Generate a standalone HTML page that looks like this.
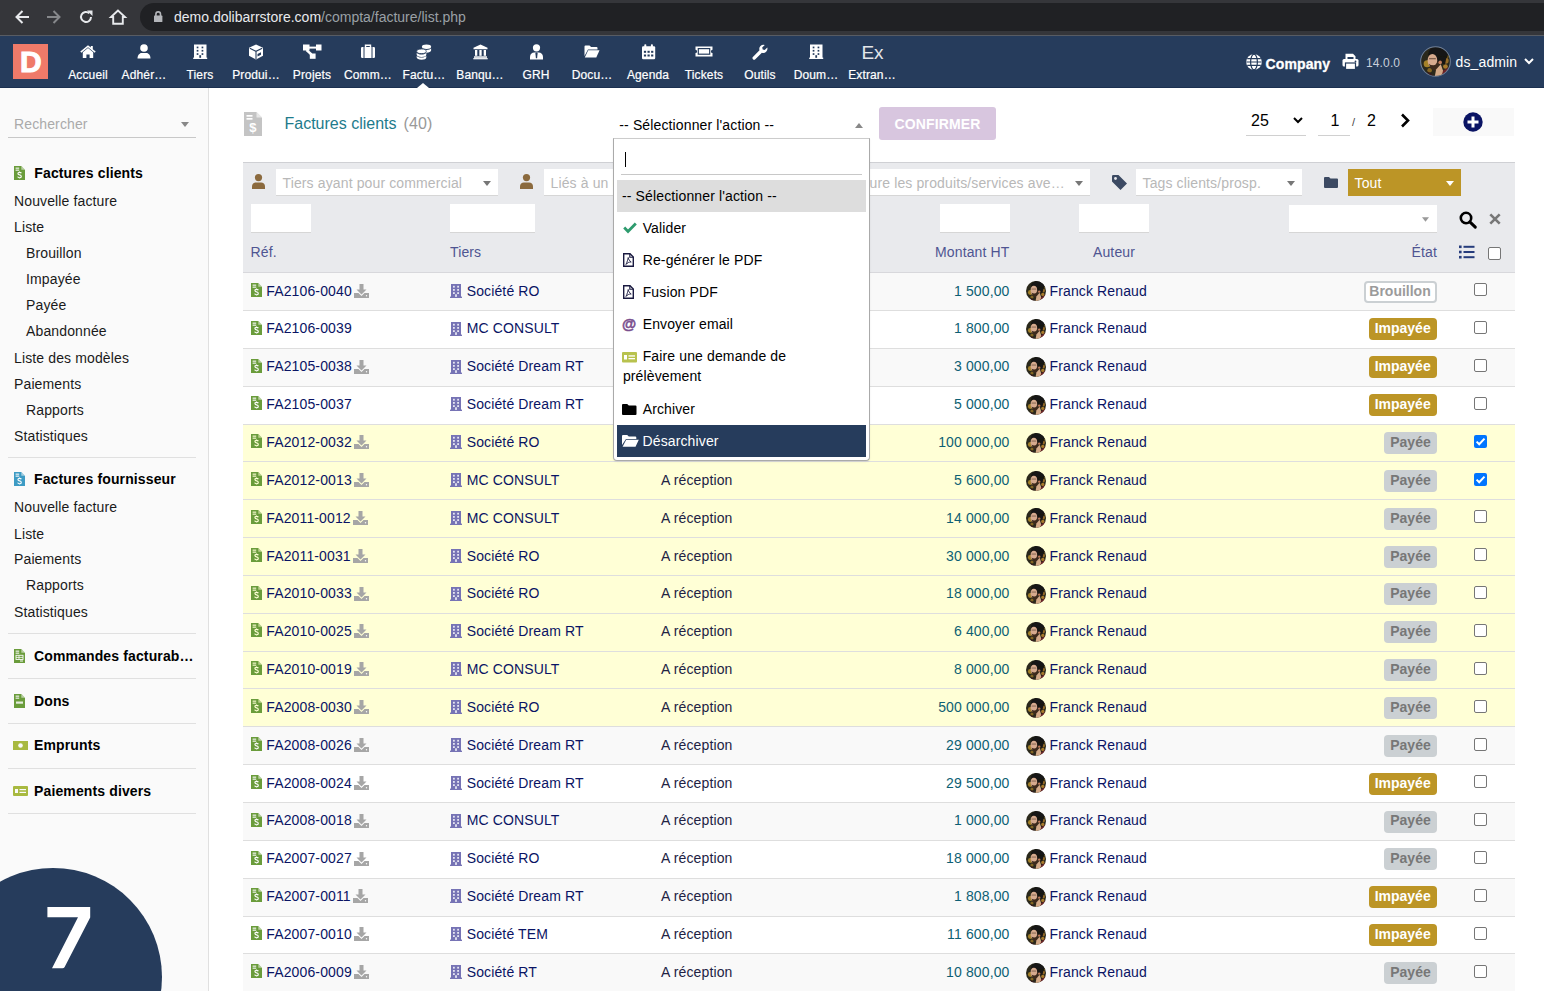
<!DOCTYPE html><html><head><meta charset="utf-8"><title>Factures clients</title><style>
*{box-sizing:border-box;margin:0;padding:0}
html,body{width:1544px;height:991px;overflow:hidden;background:#fff;font-family:"Liberation Sans", sans-serif;font-size:14px;color:#000;letter-spacing:0.13px}
.a{position:absolute}
.t{position:absolute;white-space:nowrap;line-height:1}
svg{position:absolute;display:block;overflow:visible}
</style></head><body>
<svg width="0" height="0" style="position:absolute;left:0;top:0"><defs><clipPath id="avc"><circle cx="10" cy="10" r="10"/></clipPath><filter id="avb" x="-10%" y="-10%" width="120%" height="120%"><feGaussianBlur stdDeviation="0.45"/></filter><g id="avg"><g clip-path="url(#avc)"><rect x="-1" y="-1" width="22" height="22" fill="#2a281b"/><g filter="url(#avb)"><circle cx="4.3" cy="11.5" r="2.4" fill="#b8902c" opacity="0.85"/><circle cx="6" cy="16" r="1.6" fill="#9a7424" opacity="0.8"/><circle cx="17" cy="9.5" r="2" fill="#a8782a" opacity="0.85"/><circle cx="16.8" cy="13.4" r="1.6" fill="#c08a30" opacity="0.85"/><circle cx="18" cy="6.5" r="1.1" fill="#705a20"/><ellipse cx="11.8" cy="5" rx="6.8" ry="5.4" fill="#181612"/><path d="M12 6L17.5 7L16.5 12L13.5 11z" fill="#181612"/><ellipse cx="7.9" cy="9.4" rx="3.3" ry="4.6" fill="#d6aa8e"/><rect x="5.6" y="7.6" width="4.6" height="0.9" fill="#5a4030" opacity="0.7"/><path d="M5.5 11.5Q7 16.5 10 16.2Q12.5 15.5 12.6 10.5L11.4 9.6Q10.5 12.5 8.6 12.6Q6.5 12.5 5.5 11.5z" fill="#3e2a1e"/><circle cx="13.2" cy="10.6" r="1.2" fill="#c07c5c"/><path d="M10.4 15.5L13.6 11.8L15.6 17.5L13.5 20.5H9.5z" fill="#d4aa88"/><path d="M15.2 16.2L19.5 13.8L20.5 20.5H14z" fill="#6c2228"/><path d="M5 17L9.8 20.5H3.5z" fill="#3a1a1e"/></g></g></g></defs></svg>
<div class="a" style="left:0px;top:0px;width:1544px;height:36px;background:#35363a;"></div>
<div class="a" style="left:0px;top:35px;width:1544px;height:1px;background:#585c63;"></div>
<div class="a" style="left:140px;top:3px;width:1440px;height:28px;background:#202124;border-radius:14px;"></div>
<svg style="left:15px;top:10px;" width="14" height="14" viewBox="0 0 14 14"><path d="M14 7H1.5M7.5 1L1.5 7l6 6" fill="none" stroke="#e8eaed" stroke-width="2"/></svg>
<svg style="left:47px;top:10px;" width="14" height="14" viewBox="0 0 14 14"><path d="M0 7h12.5M6.5 1l6 6-6 6" fill="none" stroke="#86888b" stroke-width="2"/></svg>
<svg style="left:79px;top:10px;" width="14" height="14" viewBox="0 0 14 14"><path d="M12 7a5 5 0 1 1-1.6-3.7" fill="none" stroke="#e8eaed" stroke-width="2"/><path d="M8 0.5h5.5V6z" fill="#e8eaed"/></svg>
<svg style="left:110px;top:9px;" width="16" height="16" viewBox="0 0 16 16"><path d="M8 1.5L1 8h2.2v6.8h9.6V8H15z" fill="none" stroke="#e8eaed" stroke-width="1.9" stroke-linejoin="miter"/></svg>
<svg style="left:154px;top:11px;" width="8.4" height="11" viewBox="0 0 8.4 11"><rect x="0" y="4.6" width="8.4" height="6.4" rx="0.6" fill="#b4b6ba"/><path d="M1.9 5V3.2a2.3 2.3 0 0 1 4.6 0V5" fill="none" stroke="#b4b6ba" stroke-width="1.6"/></svg>
<div class="t" style="left:174.00px;top:10.15px;font-size:14px;color:#e8eaed;font-weight:normal;letter-spacing:0;">demo.dolibarrstore.com<span style="color:#9aa0a6">/compta/facture/list.php</span></div>
<div class="a" style="left:0px;top:36px;width:1544px;height:52px;background:#263c5c;"></div>
<div class="a" style="left:0px;top:87px;width:1544px;height:1px;background:#1b3050;"></div>
<div class="a" style="left:13px;top:44px;width:35px;height:35px;background:#ef7a69;"></div>
<div class="t" style="left:-119.00px;width:300px;text-align:center;top:47.11px;font-size:30px;color:#fff;font-weight:bold;-webkit-text-stroke:1px #fff;">D</div>
<svg style="left:79.5px;top:44px;" width="17" height="14" viewBox="0 0 17 14"><path d="M8 1.2L0.3 7.6l1 1.1L8 3.2l6.7 5.5 1-1.1L12.8 5.3V2h-2v1.6z" fill="#fff"/><path d="M2.8 8.2L8 4l5.2 4.2V14H9.6v-3.6H6.4V14H2.8z" fill="#fff"/></svg>
<div class="t" style="left:-62.00px;width:300px;text-align:center;top:69.34px;font-size:12px;color:#fff;font-weight:normal;-webkit-text-stroke:0.2px #fff;">Accueil</div>
<svg style="left:136.0px;top:44px;" width="16" height="16" viewBox="0 0 16 16"><circle cx="8" cy="4" r="3.8" fill="#fff"/><path d="M1.5 14.5c0-3.4 2-5.6 4-5.6h5c2 0 4 2.2 4 5.6z" fill="#fff"/></svg>
<div class="t" style="left:-6.00px;width:300px;text-align:center;top:69.34px;font-size:12px;color:#fff;font-weight:normal;-webkit-text-stroke:0.2px #fff;">Adhér…</div>
<svg style="left:192.0px;top:44px;" width="16" height="16" viewBox="0 0 16 16"><rect x="2" y="0.5" width="12.5" height="13.8" fill="#fff"/><rect x="1.2" y="13.6" width="14" height="1.4" fill="#fff"/><g fill="#263c5c"><rect x="4.7" y="2.6" width="1.7" height="1.7"/><rect x="9.6" y="2.6" width="1.7" height="1.7"/><rect x="4.7" y="5.9" width="1.7" height="1.7"/><rect x="9.6" y="5.9" width="1.7" height="1.7"/><rect x="4.7" y="9.2" width="1.7" height="1.7"/><rect x="9.6" y="9.2" width="1.7" height="1.7"/><rect x="7.3" y="11.2" width="1.8" height="2.6"/></g></svg>
<div class="t" style="left:50.00px;width:300px;text-align:center;top:69.34px;font-size:12px;color:#fff;font-weight:normal;-webkit-text-stroke:0.2px #fff;">Tiers</div>
<svg style="left:248.0px;top:44px;" width="16" height="16" viewBox="0 0 16 16"><path d="M8 0.5L15 3.8v8L8 15.5 1 11.8v-8z" fill="#fff"/><path d="M1.8 4.3L8 7.3l6.2-3M8 7.3v7.6" fill="none" stroke="#263c5c" stroke-width="1.1"/><path d="M9.5 10l3.5-1.8v2.6L9.5 12.6z" fill="#263c5c"/></svg>
<div class="t" style="left:106.00px;width:300px;text-align:center;top:69.34px;font-size:12px;color:#fff;font-weight:normal;-webkit-text-stroke:0.2px #fff;">Produi…</div>
<svg style="left:302.5px;top:44px;" width="19" height="15" viewBox="0 0 19 15"><rect x="0" y="0.5" width="6.5" height="6" fill="#fff"/><rect x="6" y="2.6" width="7" height="2" fill="#fff"/><rect x="13" y="0.5" width="5.5" height="6" fill="#fff"/><path d="M3.5 6L8.5 10.5" stroke="#fff" stroke-width="2.4"/><rect x="6.8" y="9.5" width="5.8" height="5.3" fill="#fff"/></svg>
<div class="t" style="left:162.00px;width:300px;text-align:center;top:69.34px;font-size:12px;color:#fff;font-weight:normal;-webkit-text-stroke:0.2px #fff;">Projets</div>
<svg style="left:360.0px;top:44px;" width="16" height="16" viewBox="0 0 16 16"><path d="M5.5 3V1.2h5V3" fill="none" stroke="#fff" stroke-width="1.4"/><rect x="1" y="3" width="14" height="11" rx="1.3" fill="#fff"/><path d="M4 3v11M12 3v11" stroke="#263c5c" stroke-width="1"/></svg>
<div class="t" style="left:218.00px;width:300px;text-align:center;top:69.34px;font-size:12px;color:#fff;font-weight:normal;-webkit-text-stroke:0.2px #fff;">Comm…</div>
<svg style="left:416.0px;top:44px;" width="16" height="16" viewBox="0 0 16 16"><ellipse cx="10.5" cy="2.8" rx="4.6" ry="2.2" fill="#fff"/><path d="M5.9 4.3v2.2c0 1.2 2 2.2 4.6 2.2s4.6-1 4.6-2.2V4.3c-0.6 1-2.4 1.7-4.6 1.7s-4-0.7-4.6-1.7z" fill="#fff"/><ellipse cx="5.5" cy="7.3" rx="4.8" ry="2.3" fill="#fff" stroke="#263c5c" stroke-width="0.8"/><path d="M0.7 8.8v1.9c0 1.2 2.1 2.3 4.8 2.3s4.8-1 4.8-2.3V8.8c-0.6 1-2.5 1.8-4.8 1.8S1.3 9.8 0.7 8.8zM0.7 11.8v1.6c0 1.2 2.1 2.3 4.8 2.3s4.8-1 4.8-2.3v-1.6c-0.6 1-2.5 1.8-4.8 1.8s-4.2-0.8-4.8-1.8z" fill="#fff"/></svg>
<div class="t" style="left:274.00px;width:300px;text-align:center;top:69.34px;font-size:12px;color:#fff;font-weight:normal;-webkit-text-stroke:0.2px #fff;">Factu…</div>
<svg style="left:472.5px;top:44px;" width="15" height="16" viewBox="0 0 15 16"><path d="M7.5 0.5L14.5 3.8v1.4H0.5V3.8z" fill="#fff"/><rect x="2" y="6" width="2.3" height="5.8" fill="#fff"/><rect x="6.35" y="6" width="2.3" height="5.8" fill="#fff"/><rect x="10.7" y="6" width="2.3" height="5.8" fill="#fff"/><rect x="1" y="12.3" width="13" height="1.5" fill="#fff"/><rect x="0.3" y="14.1" width="14.4" height="1.2" fill="#fff"/></svg>
<div class="t" style="left:330.00px;width:300px;text-align:center;top:69.34px;font-size:12px;color:#fff;font-weight:normal;-webkit-text-stroke:0.2px #fff;">Banqu…</div>
<svg style="left:528.5px;top:44px;" width="15" height="16" viewBox="0 0 15 16"><circle cx="7.5" cy="3.8" r="3.6" fill="#fff"/><path d="M1 15.5v-2.5c0-2.6 2-4.4 4.2-4.4h4.6c2.2 0 4.2 1.8 4.2 4.4v2.5z" fill="#fff"/><path d="M6.8 8.6h1.4l0.4 1-0.5 4.6h-1.2l-0.5-4.6z" fill="#263c5c"/></svg>
<div class="t" style="left:386.00px;width:300px;text-align:center;top:69.34px;font-size:12px;color:#fff;font-weight:normal;-webkit-text-stroke:0.2px #fff;">GRH</div>
<svg style="left:584.0px;top:44px;" width="16" height="14" viewBox="0 0 16 14"><path d="M0.5 2.5a1 1 0 0 1 1-1h4l1.6 1.6h5.4a1 1 0 0 1 1 1v1.4H4L0.5 12z" fill="#fff"/><path d="M4.2 6.3h11.3L12.3 13.5H0.8z" fill="#fff"/></svg>
<div class="t" style="left:442.00px;width:300px;text-align:center;top:69.34px;font-size:12px;color:#fff;font-weight:normal;-webkit-text-stroke:0.2px #fff;">Docu…</div>
<svg style="left:640.5px;top:44px;" width="15" height="16" viewBox="0 0 15 16"><rect x="1" y="2.3" width="13.2" height="13" rx="1.2" fill="#fff"/><rect x="3.3" y="0.3" width="2" height="3.5" rx="0.8" fill="#fff"/><rect x="9.9" y="0.3" width="2" height="3.5" rx="0.8" fill="#fff"/><g fill="#263c5c"><rect x="2.9" y="6.8" width="2.2" height="2"/><rect x="6.5" y="6.8" width="2.2" height="2"/><rect x="10.1" y="6.8" width="2.2" height="2"/><rect x="2.9" y="10.5" width="2.2" height="2"/><rect x="6.5" y="10.5" width="2.2" height="2"/><rect x="10.1" y="10.5" width="2.2" height="2"/></g></svg>
<div class="t" style="left:498.00px;width:300px;text-align:center;top:69.34px;font-size:12px;color:#fff;font-weight:normal;-webkit-text-stroke:0.2px #fff;">Agenda</div>
<svg style="left:695.0px;top:44px;" width="18" height="15" viewBox="0 0 18 15"><path d="M0.5 2.5h17v3.3a1.6 1.6 0 0 0 0 3.2v3.5H0.5V9a1.6 1.6 0 0 0 0-3.2z" fill="#fff"/><rect x="3.3" y="4.6" width="11.4" height="5.6" fill="none" stroke="#263c5c" stroke-width="1.2"/></svg>
<div class="t" style="left:554.00px;width:300px;text-align:center;top:69.34px;font-size:12px;color:#fff;font-weight:normal;-webkit-text-stroke:0.2px #fff;">Tickets</div>
<svg style="left:752.0px;top:44px;" width="16" height="16" viewBox="0 0 16 16"><path d="M15.3 3.6l-2.6 2.5-2-0.5-0.5-2L12.8 1A4.2 4.2 0 0 0 7.5 6.3L0.9 12.9a1.7 1.7 0 0 0 2.4 2.4l6.6-6.6A4.2 4.2 0 0 0 15.3 3.6z" fill="#fff"/></svg>
<div class="t" style="left:610.00px;width:300px;text-align:center;top:69.34px;font-size:12px;color:#fff;font-weight:normal;-webkit-text-stroke:0.2px #fff;">Outils</div>
<svg style="left:808.0px;top:44px;" width="16" height="16" viewBox="0 0 16 16"><rect x="2" y="0.5" width="12.5" height="13.8" fill="#fff"/><rect x="1.2" y="13.6" width="14" height="1.4" fill="#fff"/><g fill="#263c5c"><rect x="4.7" y="2.6" width="1.7" height="1.7"/><rect x="9.6" y="2.6" width="1.7" height="1.7"/><rect x="4.7" y="5.9" width="1.7" height="1.7"/><rect x="9.6" y="5.9" width="1.7" height="1.7"/><rect x="4.7" y="9.2" width="1.7" height="1.7"/><rect x="9.6" y="9.2" width="1.7" height="1.7"/><rect x="7.3" y="11.2" width="1.8" height="2.6"/></g></svg>
<div class="t" style="left:666.00px;width:300px;text-align:center;top:69.34px;font-size:12px;color:#fff;font-weight:normal;-webkit-text-stroke:0.2px #fff;">Doum…</div>
<div class="t" style="left:722.50px;width:300px;text-align:center;top:42.92px;font-size:19px;color:#e4e6ea;font-weight:normal;letter-spacing:0;">Ex</div>
<div class="t" style="left:722.00px;width:300px;text-align:center;top:69.34px;font-size:12px;color:#fff;font-weight:normal;-webkit-text-stroke:0.2px #fff;">Extran…</div>
<svg style="left:417px;top:83px;" width="12" height="5" viewBox="0 0 12 5"><path d="M0 5L6 0l6 5z" fill="#fff"/></svg>
<svg style="left:1246px;top:54px;" width="16" height="16" viewBox="0 0 16 16"><circle cx="8" cy="8" r="7.8" fill="#fff"/><path d="M0.4 8h15.2M1.2 4.6h13.6M1.2 11.4h13.6" stroke="#263c5c" stroke-width="1.1"/><ellipse cx="8" cy="8" rx="3.4" ry="7.8" fill="none" stroke="#263c5c" stroke-width="1.2"/></svg>
<div class="t" style="left:1265.50px;top:56.85px;font-size:14px;color:#fff;font-weight:bold;-webkit-text-stroke:0.3px #fff;">Company</div>
<svg style="left:1342px;top:53px;" width="17" height="17" viewBox="0 0 17 17"><path d="M3.5 0.8h7.5l2.5 2.5V6h-2V4H5.5v2h-2z" fill="#fff"/><rect x="0.5" y="6" width="16" height="7.5" rx="1.5" fill="#fff"/><rect x="3.5" y="10" width="10" height="6.5" fill="#fff" stroke="#263c5c" stroke-width="1.2"/><circle cx="13.5" cy="8.5" r="0.9" fill="#263c5c"/></svg>
<div class="t" style="left:1366.00px;top:56.84px;font-size:12px;color:#c9cfda;font-weight:normal;">14.0.0</div>
<svg style="left:1420px;top:46px" width="31" height="31" viewBox="-0.6 -0.6 21.2 21.2"><use href="#avg"/><circle cx="10" cy="10" r="10.15" fill="none" stroke="#6f7f96" stroke-width="0.7"/></svg>
<div class="t" style="left:1455.50px;top:54.65px;font-size:14px;color:#fff;font-weight:normal;">ds_admin</div>
<svg style="left:1524px;top:58px;" width="10" height="7" viewBox="0 0 10 7"><path d="M1 1l4 4 4-4" fill="none" stroke="#fff" stroke-width="2"/></svg>
<div class="a" style="left:0px;top:88px;width:208px;height:903px;background:#fafafa;"></div>
<div class="a" style="left:208px;top:88px;width:1px;height:903px;background:#e0e0e0;"></div>
<div class="t" style="left:14.00px;top:117.15px;font-size:14px;color:#aaa;font-weight:normal;">Rechercher</div>
<svg style="left:181px;top:122px;" width="8" height="5" viewBox="0 0 8 5"><path d="M0 0h8L4 5z" fill="#888"/></svg>
<div class="a" style="left:8px;top:137px;width:188px;height:1px;background:#c8c8c8;"></div>
<svg style="left:14px;top:166px;" width="11" height="14" viewBox="0 0 11 14"><path d="M0 0h7.3L11 3.7V14H0z" fill="#6a9c3b"/><path d="M7.3 0v3.7H11" fill="#fafafa" opacity="0.55"/><g fill="#fafafa"><rect x="1.6" y="1.6" width="3.6" height="1.1"/><rect x="1.6" y="3.6" width="3.6" height="1.1"/></g><path d="M7.3 7.3Q7 6.4 5.6 6.4Q3.9 6.4 3.9 7.6Q3.9 8.6 5.5 8.9Q7.3 9.2 7.3 10.4Q7.3 11.7 5.5 11.7Q4 11.7 3.7 10.7M5.5 5.6v1M5.5 11.6v1" fill="none" stroke="#fafafa" stroke-width="1.15"/></svg>
<div class="t" style="left:34.30px;top:165.85px;font-size:14px;color:#000;font-weight:bold;">Factures clients</div>
<div class="t" style="left:14.00px;top:193.85px;font-size:14px;color:#1a1a1a;font-weight:normal;">Nouvelle facture</div>
<div class="t" style="left:14.00px;top:219.95px;font-size:14px;color:#1a1a1a;font-weight:normal;">Liste</div>
<div class="t" style="left:26.00px;top:246.15px;font-size:14px;color:#1a1a1a;font-weight:normal;">Brouillon</div>
<div class="t" style="left:26.00px;top:272.15px;font-size:14px;color:#1a1a1a;font-weight:normal;">Impayée</div>
<div class="t" style="left:26.00px;top:298.15px;font-size:14px;color:#1a1a1a;font-weight:normal;">Payée</div>
<div class="t" style="left:26.00px;top:324.15px;font-size:14px;color:#1a1a1a;font-weight:normal;">Abandonnée</div>
<div class="t" style="left:14.00px;top:350.65px;font-size:14px;color:#1a1a1a;font-weight:normal;">Liste des modèles</div>
<div class="t" style="left:14.00px;top:376.75px;font-size:14px;color:#1a1a1a;font-weight:normal;">Paiements</div>
<div class="t" style="left:26.00px;top:402.85px;font-size:14px;color:#1a1a1a;font-weight:normal;">Rapports</div>
<div class="t" style="left:14.00px;top:429.05px;font-size:14px;color:#1a1a1a;font-weight:normal;">Statistiques</div>
<div class="a" style="left:8px;top:457px;width:188px;height:1px;background:#e0e0e0;"></div>
<svg style="left:14px;top:472px;" width="11" height="14" viewBox="0 0 11 14"><path d="M0 0h7.3L11 3.7V14H0z" fill="#3d9bc4"/><path d="M7.3 0v3.7H11" fill="#fafafa" opacity="0.55"/><g fill="#fafafa"><rect x="1.6" y="1.6" width="3.6" height="1.1"/><rect x="1.6" y="3.6" width="3.6" height="1.1"/></g><path d="M7.3 7.3Q7 6.4 5.6 6.4Q3.9 6.4 3.9 7.6Q3.9 8.6 5.5 8.9Q7.3 9.2 7.3 10.4Q7.3 11.7 5.5 11.7Q4 11.7 3.7 10.7M5.5 5.6v1M5.5 11.6v1" fill="none" stroke="#fafafa" stroke-width="1.15"/></svg>
<div class="t" style="left:34.00px;top:472.05px;font-size:14px;color:#000;font-weight:bold;">Factures fournisseur</div>
<div class="t" style="left:14.00px;top:500.15px;font-size:14px;color:#1a1a1a;font-weight:normal;">Nouvelle facture</div>
<div class="t" style="left:14.00px;top:526.65px;font-size:14px;color:#1a1a1a;font-weight:normal;">Liste</div>
<div class="t" style="left:14.00px;top:552.15px;font-size:14px;color:#1a1a1a;font-weight:normal;">Paiements</div>
<div class="t" style="left:26.00px;top:578.15px;font-size:14px;color:#1a1a1a;font-weight:normal;">Rapports</div>
<div class="t" style="left:14.00px;top:605.15px;font-size:14px;color:#1a1a1a;font-weight:normal;">Statistiques</div>
<div class="a" style="left:8px;top:633px;width:188px;height:1px;background:#e0e0e0;"></div>
<svg style="left:14px;top:649px;" width="11" height="14" viewBox="0 0 11 14"><path d="M0 0h7.3L11 3.7V14H0z" fill="#6a9c3b"/><path d="M7.3 0v3.7H11" fill="#fafafa" opacity="0.55"/><g fill="#fafafa"><rect x="1.6" y="1.6" width="3.6" height="1.1"/><rect x="1.6" y="3.6" width="3.6" height="1.1"/></g></svg>
<svg style="left:14px;top:649px;" width="11" height="14" viewBox="0 0 11 14"><rect x="2" y="6.3" width="7" height="4.2" fill="none" stroke="#fafafa" stroke-width="0.9"/><path d="M2 8.4h7M5 6.3v4.2" stroke="#fafafa" stroke-width="0.8"/><rect x="6" y="11.5" width="3" height="1" fill="#fafafa"/></svg>
<div class="t" style="left:34.00px;top:648.95px;font-size:14px;color:#000;font-weight:bold;">Commandes facturab…</div>
<div class="a" style="left:8px;top:678px;width:188px;height:1px;background:#e0e0e0;"></div>
<svg style="left:14px;top:694px;" width="11" height="14" viewBox="0 0 11 14"><path d="M0 0h7.3L11 3.7V14H0z" fill="#6a9c3b"/><path d="M7.3 0v3.7H11" fill="#fafafa" opacity="0.55"/><g fill="#fafafa"><rect x="1.6" y="1.6" width="3.6" height="1.1"/><rect x="1.6" y="3.6" width="3.6" height="1.1"/></g></svg>
<svg style="left:14px;top:694px;" width="11" height="14" viewBox="0 0 11 14"><rect x="2" y="7.5" width="7" height="2.2" fill="#fafafa" opacity="0.85"/></svg>
<div class="t" style="left:34.00px;top:693.65px;font-size:14px;color:#000;font-weight:bold;">Dons</div>
<div class="a" style="left:8px;top:723px;width:188px;height:1px;background:#e0e0e0;"></div>
<svg style="left:13px;top:741px;" width="15" height="9" viewBox="0 0 15 9"><rect x="0" y="0" width="15" height="9" fill="#a8b940"/><circle cx="7.5" cy="4.5" r="2.3" fill="#fafafa"/></svg>
<div class="t" style="left:34.00px;top:738.15px;font-size:14px;color:#000;font-weight:bold;">Emprunts</div>
<div class="a" style="left:8px;top:768px;width:188px;height:1px;background:#e0e0e0;"></div>
<svg style="left:13px;top:786px;" width="15" height="10" viewBox="0 0 15 10"><rect x="0" y="0" width="15" height="10" rx="1" fill="#a8b940"/><rect x="2" y="3" width="3" height="4" fill="#fafafa"/><rect x="6.5" y="3" width="6.5" height="1.2" fill="#fafafa"/><rect x="6.5" y="5.8" width="6.5" height="1.2" fill="#fafafa"/></svg>
<div class="t" style="left:34.00px;top:783.75px;font-size:14px;color:#000;font-weight:bold;">Paiements divers</div>
<div class="a" style="left:8px;top:813px;width:188px;height:1px;background:#e0e0e0;"></div>
<div class="a" style="left:-56px;top:868px;width:218px;height:218px;border-radius:50%;background:#263c5c"></div>
<svg style="left:47px;top:907px;" width="44" height="62" viewBox="0 0 44 62"><path d="M0.4 0H43.2V10.5L17.5 60.2Q16.8 61.2 15.5 61.2H5L31 10.2H0.4z" fill="#fff"/></svg>
<svg style="left:244px;top:112px;" width="18" height="24" viewBox="0 0 18 24"><path d="M0 0h12.5L18 5.5V24H0z" fill="#c4c4c4"/><path d="M12.5 0v5.5H18z" fill="#fff" opacity="0.6"/><g fill="#fff"><rect x="2.5" y="3" width="6" height="1.7"/><rect x="2.5" y="6" width="6" height="1.7"/></g><text x="9" y="20" font-family="Liberation Sans" font-weight="bold" font-size="13" fill="#fff" text-anchor="middle">$</text></svg>
<div class="t" style="left:284.50px;top:116.46px;font-size:16px;color:#1e7b8c;font-weight:normal;letter-spacing:0;">Factures clients</div>
<div class="t" style="left:403.50px;top:116.46px;font-size:16px;color:#999;font-weight:normal;">(40)</div>
<div class="t" style="left:619.30px;top:118.15px;font-size:14px;color:#000;font-weight:normal;">-- Sélectionner l'action --</div>
<svg style="left:855px;top:122.5px;" width="8" height="5" viewBox="0 0 8 5"><path d="M0 5h8L4 0z" fill="#888"/></svg>
<div class="a" style="left:879px;top:107px;width:117px;height:33px;background:#d8c6df;border-radius:3px;"></div>
<div class="t" style="left:787.50px;width:300px;text-align:center;top:117.15px;font-size:14px;color:#fff;font-weight:bold;">CONFIRMER</div>
<div class="t" style="left:1251.00px;top:112.96px;font-size:16px;color:#000;font-weight:normal;">25</div>
<svg style="left:1293px;top:117px;" width="10" height="6" viewBox="0 0 10 6"><path d="M1 1l4 4 4-4" fill="none" stroke="#000" stroke-width="2"/></svg>
<div class="a" style="left:1246px;top:135px;width:60px;height:1px;background:#d0d0d0;"></div>
<div class="t" style="left:1330.50px;top:112.96px;font-size:16px;color:#000;font-weight:normal;">1</div>
<div class="a" style="left:1318px;top:135px;width:32px;height:1px;background:#d0d0d0;"></div>
<div class="t" style="left:1352.00px;top:117.19px;font-size:11px;color:#444;font-weight:normal;">/</div>
<div class="t" style="left:1367.00px;top:112.96px;font-size:16px;color:#000;font-weight:normal;">2</div>
<svg style="left:1400px;top:113px;" width="10" height="15" viewBox="0 0 10 15"><path d="M2 1.5l6 6-6 6" fill="none" stroke="#000" stroke-width="2.6"/></svg>
<div class="a" style="left:1433px;top:108px;width:81px;height:28px;background:#f9f9f9;"></div>
<svg style="left:1463px;top:111.5px;" width="20" height="20" viewBox="0 0 20 20"><circle cx="10" cy="10" r="9.7" fill="#0a1464"/><path d="M10 4.5v11M4.5 10h11" stroke="#fff" stroke-width="3"/></svg>
<div class="a" style="left:243px;top:162px;width:1272px;height:110px;background:#e9eaed;"></div>
<div class="a" style="left:243px;top:162px;width:1272px;height:1px;background:#cfd0d4;"></div>
<div class="a" style="left:243px;top:272px;width:1272px;height:1px;background:#d8d8dc;"></div>
<svg style="left:252px;top:174px;" width="13" height="15" viewBox="0 0 13 15"><circle cx="6.5" cy="3.6" r="3.6" fill="#8b6a3e"/><path d="M0 15v-2.6C0 10 1.8 8.4 3.9 8.4h5.2C11.2 8.4 13 10 13 12.4V15z" fill="#8b6a3e"/></svg>
<div class="a" style="left:276px;top:169px;width:222px;height:27px;background:#fff;border-bottom:1px solid #d6d6d6;"></div><div class="t" style="left:282.50px;top:176.15px;font-size:14px;color:#b8b8b8;font-weight:normal;">Tiers ayant pour commercial</div><svg style="left:483px;top:181px;" width="8" height="5" viewBox="0 0 8 5"><path d="M0 0h8L4 5z" fill="#777"/></svg>
<svg style="left:520px;top:174px;" width="13" height="15" viewBox="0 0 13 15"><circle cx="6.5" cy="3.6" r="3.6" fill="#8b6a3e"/><path d="M0 15v-2.6C0 10 1.8 8.4 3.9 8.4h5.2C11.2 8.4 13 10 13 12.4V15z" fill="#8b6a3e"/></svg>
<div class="a" style="left:544px;top:169px;width:546px;height:27px;background:#fff;border-bottom:1px solid #d6d6d6;"></div><div class="t" style="left:550.50px;top:176.15px;font-size:14px;color:#b8b8b8;font-weight:normal;">Liés à un utilisateur</div><svg style="left:1075px;top:181px;" width="8" height="5" viewBox="0 0 8 5"><path d="M0 0h8L4 5z" fill="#777"/></svg>
<div class="t" style="left:869.50px;top:176.15px;font-size:14px;color:#b8b8b8;font-weight:normal;">ure les produits/services ave…</div>
<svg style="left:1112px;top:175px;" width="15" height="15" viewBox="0 0 15 15"><path d="M0 1.2A1.2 1.2 0 0 1 1.2 0H6.5L15 8.5 8.5 15 0 6.5z" fill="#3c4a63"/><circle cx="3.5" cy="3.5" r="1.4" fill="#e9eaed"/></svg>
<div class="a" style="left:1136px;top:169px;width:166px;height:27px;background:#fff;border-bottom:1px solid #d6d6d6;"></div><div class="t" style="left:1142.50px;top:176.15px;font-size:14px;color:#b8b8b8;font-weight:normal;">Tags clients/prosp.</div><svg style="left:1287px;top:181px;" width="8" height="5" viewBox="0 0 8 5"><path d="M0 0h8L4 5z" fill="#777"/></svg>
<svg style="left:1324px;top:177px;" width="14" height="11" viewBox="0 0 14 11"><path d="M0 1a1 1 0 0 1 1-1h4l1.5 1.6H13a1 1 0 0 1 1 1V10a1 1 0 0 1-1 1H1a1 1 0 0 1-1-1z" fill="#3c4a63"/></svg>
<div class="a" style="left:1348px;top:169px;width:113px;height:27px;background:#bc9526;"></div>
<div class="t" style="left:1354.50px;top:176.15px;font-size:14px;color:#fff;font-weight:normal;">Tout</div>
<svg style="left:1446px;top:181px;" width="8" height="5" viewBox="0 0 8 5"><path d="M0 0h8L4 5z" fill="#fff"/></svg>
<div class="a" style="left:251px;top:204px;width:60px;height:29px;background:#fff;border-bottom:1px solid #d6d6d6;"></div>
<div class="a" style="left:450px;top:204px;width:85px;height:29px;background:#fff;border-bottom:1px solid #d6d6d6;"></div>
<div class="a" style="left:940px;top:204px;width:70px;height:29px;background:#fff;border-bottom:1px solid #d6d6d6;"></div>
<div class="a" style="left:1079px;top:204px;width:70px;height:29px;background:#fff;border-bottom:1px solid #d6d6d6;"></div>
<div class="a" style="left:1289px;top:205px;width:148px;height:27.5px;background:#fff;border-bottom:1px solid #d6d6d6;"></div>
<svg style="left:1421.5px;top:217px;" width="7" height="5" viewBox="0 0 8 5"><path d="M0 0h8L4 5z" fill="#999"/></svg>
<svg style="left:1459px;top:211px;" width="18" height="17" viewBox="0 0 18 17"><circle cx="7" cy="7" r="5.2" fill="none" stroke="#000" stroke-width="2.6"/><path d="M10.8 10.8l5.5 5.3" stroke="#000" stroke-width="3" stroke-linecap="round"/></svg>
<svg style="left:1489px;top:213px;" width="12" height="12" viewBox="0 0 12 12"><path d="M1.3 1.3l9.4 9.4M10.7 1.3l-9.4 9.4" stroke="#777" stroke-width="2.6"/></svg>
<div class="t" style="left:250.60px;top:245.15px;font-size:14px;color:#4f5592;font-weight:normal;">Réf.</div>
<div class="t" style="left:450.00px;top:245.15px;font-size:14px;color:#4f5592;font-weight:normal;">Tiers</div>
<div class="t" style="right:534.50px;top:245.15px;font-size:14px;color:#4f5592;font-weight:normal;">Montant HT</div>
<div class="t" style="left:964.00px;width:300px;text-align:center;top:245.15px;font-size:14px;color:#4f5592;font-weight:normal;">Auteur</div>
<div class="t" style="right:107.00px;top:245.15px;font-size:14px;color:#4f5592;font-weight:normal;">État</div>
<svg style="left:1459px;top:245px;" width="16" height="14" viewBox="0 0 16 14"><g fill="#263c7c"><rect x="0" y="0.5" width="2.6" height="2.6"/><rect x="0" y="5.7" width="2.6" height="2.6"/><rect x="0" y="10.9" width="2.6" height="2.6"/><rect x="4.5" y="0.8" width="11" height="2"/><rect x="4.5" y="6" width="11" height="2"/><rect x="4.5" y="11.2" width="11" height="2"/></g></svg>
<div class="a" style="left:1488px;top:247px;width:13px;height:13px;border:1px solid #767676;border-radius:2px;background:#fff"></div>
<div class="a" style="left:243px;top:273px;width:1272px;height:37px;background:#f9f9f9"></div>
<div class="a" style="left:243px;top:311px;width:1272px;height:37px;background:#ffffff"></div>
<div class="a" style="left:243px;top:349px;width:1272px;height:37px;background:#f9f9f9"></div>
<div class="a" style="left:243px;top:387px;width:1272px;height:37px;background:#ffffff"></div>
<div class="a" style="left:243px;top:425px;width:1272px;height:36px;background:#ffffd6"></div>
<div class="a" style="left:243px;top:462px;width:1272px;height:37px;background:#ffffd6"></div>
<div class="a" style="left:243px;top:500px;width:1272px;height:37px;background:#ffffd6"></div>
<div class="a" style="left:243px;top:538px;width:1272px;height:37px;background:#ffffd6"></div>
<div class="a" style="left:243px;top:576px;width:1272px;height:37px;background:#ffffd6"></div>
<div class="a" style="left:243px;top:614px;width:1272px;height:37px;background:#ffffd6"></div>
<div class="a" style="left:243px;top:652px;width:1272px;height:36px;background:#ffffd6"></div>
<div class="a" style="left:243px;top:689px;width:1272px;height:37px;background:#ffffd6"></div>
<div class="a" style="left:243px;top:727px;width:1272px;height:37px;background:#f9f9f9"></div>
<div class="a" style="left:243px;top:765px;width:1272px;height:37px;background:#ffffff"></div>
<div class="a" style="left:243px;top:803px;width:1272px;height:37px;background:#f9f9f9"></div>
<div class="a" style="left:243px;top:841px;width:1272px;height:37px;background:#ffffff"></div>
<div class="a" style="left:243px;top:879px;width:1272px;height:37px;background:#f9f9f9"></div>
<div class="a" style="left:243px;top:917px;width:1272px;height:36px;background:#ffffff"></div>
<div class="a" style="left:243px;top:954px;width:1272px;height:37px;background:#f9f9f9"></div>
<div class="a" style="left:243px;top:310px;width:1272px;height:1px;background:#dedede"></div>
<div class="a" style="left:243px;top:348px;width:1272px;height:1px;background:#dedede"></div>
<div class="a" style="left:243px;top:386px;width:1272px;height:1px;background:#dedede"></div>
<div class="a" style="left:243px;top:424px;width:1272px;height:1px;background:#dedede"></div>
<div class="a" style="left:243px;top:461px;width:1272px;height:1px;background:#dedede"></div>
<div class="a" style="left:243px;top:499px;width:1272px;height:1px;background:#dedede"></div>
<div class="a" style="left:243px;top:537px;width:1272px;height:1px;background:#dedede"></div>
<div class="a" style="left:243px;top:575px;width:1272px;height:1px;background:#dedede"></div>
<div class="a" style="left:243px;top:613px;width:1272px;height:1px;background:#dedede"></div>
<div class="a" style="left:243px;top:651px;width:1272px;height:1px;background:#dedede"></div>
<div class="a" style="left:243px;top:688px;width:1272px;height:1px;background:#dedede"></div>
<div class="a" style="left:243px;top:726px;width:1272px;height:1px;background:#dedede"></div>
<div class="a" style="left:243px;top:764px;width:1272px;height:1px;background:#dedede"></div>
<div class="a" style="left:243px;top:802px;width:1272px;height:1px;background:#dedede"></div>
<div class="a" style="left:243px;top:840px;width:1272px;height:1px;background:#dedede"></div>
<div class="a" style="left:243px;top:878px;width:1272px;height:1px;background:#dedede"></div>
<div class="a" style="left:243px;top:916px;width:1272px;height:1px;background:#dedede"></div>
<div class="a" style="left:243px;top:953px;width:1272px;height:1px;background:#dedede"></div>
<div class="a" style="left:243px;top:991px;width:1272px;height:1px;background:#dedede"></div>
<svg style="left:251px;top:283px;" width="11" height="14" viewBox="0 0 11 14"><path d="M0 0h7.3L11 3.7V14H0z" fill="#6a9c3b"/><path d="M7.3 0v3.7H11" fill="#f9f9f9" opacity="0.55"/><g fill="#f9f9f9"><rect x="1.6" y="1.6" width="3.6" height="1.1"/><rect x="1.6" y="3.6" width="3.6" height="1.1"/></g><path d="M7.3 7.3Q7 6.4 5.6 6.4Q3.9 6.4 3.9 7.6Q3.9 8.6 5.5 8.9Q7.3 9.2 7.3 10.4Q7.3 11.7 5.5 11.7Q4 11.7 3.7 10.7M5.5 5.6v1M5.5 11.6v1" fill="none" stroke="#f9f9f9" stroke-width="1.15"/></svg>
<div class="t" style="left:266.30px;top:283.57px;font-size:14px;color:#0a1464;font-weight:normal;">FA2106-0040<svg style="position:absolute;left:100%;margin-left:2.7px;top:0.43px" width="15" height="14" viewBox="0 0 15 14"><path d="M5.5 0h4v5.5h3L7.5 10.5 2.5 5.5h3z" fill="#a6a6a6"/><path d="M0 9h4.5l3 3 3-3H15v5H0z" fill="#a6a6a6"/><circle cx="12.5" cy="11.8" r="0.7" fill="#fff"/></svg></div>
<svg style="left:450px;top:284px;" width="12" height="14" viewBox="0 0 12 14"><rect x="1" y="0" width="10" height="13" fill="#7673b5"/><rect x="0" y="12.6" width="12" height="1.4" fill="#7673b5"/><g fill="#e6e6f2"><rect x="3" y="1.8" width="1.8" height="1.8"/><rect x="7.2" y="1.8" width="1.8" height="1.8"/><rect x="3" y="5" width="1.8" height="1.8"/><rect x="7.2" y="5" width="1.8" height="1.8"/><rect x="3" y="8.2" width="1.8" height="1.8"/><rect x="7.2" y="8.2" width="1.8" height="1.8"/><rect x="5.1" y="10.3" width="1.8" height="2.6"/></g></svg>
<div class="t" style="left:466.70px;top:283.57px;font-size:14px;color:#0a1464;font-weight:normal;">Société RO</div>
<div class="t" style="left:661.00px;top:283.57px;font-size:14px;color:#222244;font-weight:normal;">A réception</div>
<div class="t" style="right:534.50px;top:283.57px;font-size:14px;color:#0d5f74;font-weight:normal;">1 500,00</div>
<svg style="left:1026px;top:281.32px" width="20" height="20" viewBox="0 0 20 20"><use href="#avg"/></svg>
<div class="t" style="left:1049.50px;top:283.57px;font-size:14px;color:#0a1464;font-weight:normal;">Franck Renaud</div>
<div class="a" style="left:1364px;top:280.62px;width:72.5px;height:22px;border:2px solid #cbd0d3;border-radius:4px;background:#fff"></div>
<div class="t" style="left:1250.00px;width:300px;text-align:center;top:283.57px;font-size:14px;color:#9b9b9b;font-weight:bold;letter-spacing:0;">Brouillon</div>
<div class="a" style="left:1474px;top:283.32px;width:13px;height:13px;border:1px solid #767676;border-radius:2px;background:#fff"></div>
<svg style="left:251px;top:321px;" width="11" height="14" viewBox="0 0 11 14"><path d="M0 0h7.3L11 3.7V14H0z" fill="#6a9c3b"/><path d="M7.3 0v3.7H11" fill="#ffffff" opacity="0.55"/><g fill="#ffffff"><rect x="1.6" y="1.6" width="3.6" height="1.1"/><rect x="1.6" y="3.6" width="3.6" height="1.1"/></g><path d="M7.3 7.3Q7 6.4 5.6 6.4Q3.9 6.4 3.9 7.6Q3.9 8.6 5.5 8.9Q7.3 9.2 7.3 10.4Q7.3 11.7 5.5 11.7Q4 11.7 3.7 10.7M5.5 5.6v1M5.5 11.6v1" fill="none" stroke="#ffffff" stroke-width="1.15"/></svg>
<div class="t" style="left:266.30px;top:321.42px;font-size:14px;color:#0a1464;font-weight:normal;">FA2106-0039</div>
<svg style="left:450px;top:322px;" width="12" height="14" viewBox="0 0 12 14"><rect x="1" y="0" width="10" height="13" fill="#7673b5"/><rect x="0" y="12.6" width="12" height="1.4" fill="#7673b5"/><g fill="#e6e6f2"><rect x="3" y="1.8" width="1.8" height="1.8"/><rect x="7.2" y="1.8" width="1.8" height="1.8"/><rect x="3" y="5" width="1.8" height="1.8"/><rect x="7.2" y="5" width="1.8" height="1.8"/><rect x="3" y="8.2" width="1.8" height="1.8"/><rect x="7.2" y="8.2" width="1.8" height="1.8"/><rect x="5.1" y="10.3" width="1.8" height="2.6"/></g></svg>
<div class="t" style="left:466.70px;top:321.42px;font-size:14px;color:#0a1464;font-weight:normal;">MC CONSULT</div>
<div class="t" style="left:661.00px;top:321.42px;font-size:14px;color:#222244;font-weight:normal;">A réception</div>
<div class="t" style="right:534.50px;top:321.42px;font-size:14px;color:#0d5f74;font-weight:normal;">1 800,00</div>
<svg style="left:1026px;top:319.17px" width="20" height="20" viewBox="0 0 20 20"><use href="#avg"/></svg>
<div class="t" style="left:1049.50px;top:321.42px;font-size:14px;color:#0a1464;font-weight:normal;">Franck Renaud</div>
<div class="a" style="left:1369px;top:318.47px;width:67.5px;height:22px;border-radius:4px;background:#bc9526"></div>
<div class="t" style="left:1252.70px;width:300px;text-align:center;top:321.42px;font-size:14px;color:#fff;font-weight:bold;letter-spacing:0;">Impayée</div>
<div class="a" style="left:1474px;top:321.17px;width:13px;height:13px;border:1px solid #767676;border-radius:2px;background:#fff"></div>
<svg style="left:251px;top:359px;" width="11" height="14" viewBox="0 0 11 14"><path d="M0 0h7.3L11 3.7V14H0z" fill="#6a9c3b"/><path d="M7.3 0v3.7H11" fill="#f9f9f9" opacity="0.55"/><g fill="#f9f9f9"><rect x="1.6" y="1.6" width="3.6" height="1.1"/><rect x="1.6" y="3.6" width="3.6" height="1.1"/></g><path d="M7.3 7.3Q7 6.4 5.6 6.4Q3.9 6.4 3.9 7.6Q3.9 8.6 5.5 8.9Q7.3 9.2 7.3 10.4Q7.3 11.7 5.5 11.7Q4 11.7 3.7 10.7M5.5 5.6v1M5.5 11.6v1" fill="none" stroke="#f9f9f9" stroke-width="1.15"/></svg>
<div class="t" style="left:266.30px;top:359.27px;font-size:14px;color:#0a1464;font-weight:normal;">FA2105-0038<svg style="position:absolute;left:100%;margin-left:2.7px;top:0.73px" width="15" height="14" viewBox="0 0 15 14"><path d="M5.5 0h4v5.5h3L7.5 10.5 2.5 5.5h3z" fill="#a6a6a6"/><path d="M0 9h4.5l3 3 3-3H15v5H0z" fill="#a6a6a6"/><circle cx="12.5" cy="11.8" r="0.7" fill="#fff"/></svg></div>
<svg style="left:450px;top:360px;" width="12" height="14" viewBox="0 0 12 14"><rect x="1" y="0" width="10" height="13" fill="#7673b5"/><rect x="0" y="12.6" width="12" height="1.4" fill="#7673b5"/><g fill="#e6e6f2"><rect x="3" y="1.8" width="1.8" height="1.8"/><rect x="7.2" y="1.8" width="1.8" height="1.8"/><rect x="3" y="5" width="1.8" height="1.8"/><rect x="7.2" y="5" width="1.8" height="1.8"/><rect x="3" y="8.2" width="1.8" height="1.8"/><rect x="7.2" y="8.2" width="1.8" height="1.8"/><rect x="5.1" y="10.3" width="1.8" height="2.6"/></g></svg>
<div class="t" style="left:466.70px;top:359.27px;font-size:14px;color:#0a1464;font-weight:normal;">Société Dream RT</div>
<div class="t" style="left:661.00px;top:359.27px;font-size:14px;color:#222244;font-weight:normal;">A réception</div>
<div class="t" style="right:534.50px;top:359.27px;font-size:14px;color:#0d5f74;font-weight:normal;">3 000,00</div>
<svg style="left:1026px;top:357.02px" width="20" height="20" viewBox="0 0 20 20"><use href="#avg"/></svg>
<div class="t" style="left:1049.50px;top:359.27px;font-size:14px;color:#0a1464;font-weight:normal;">Franck Renaud</div>
<div class="a" style="left:1369px;top:356.32px;width:67.5px;height:22px;border-radius:4px;background:#bc9526"></div>
<div class="t" style="left:1252.70px;width:300px;text-align:center;top:359.27px;font-size:14px;color:#fff;font-weight:bold;letter-spacing:0;">Impayée</div>
<div class="a" style="left:1474px;top:359.02px;width:13px;height:13px;border:1px solid #767676;border-radius:2px;background:#fff"></div>
<svg style="left:251px;top:396px;" width="11" height="14" viewBox="0 0 11 14"><path d="M0 0h7.3L11 3.7V14H0z" fill="#6a9c3b"/><path d="M7.3 0v3.7H11" fill="#ffffff" opacity="0.55"/><g fill="#ffffff"><rect x="1.6" y="1.6" width="3.6" height="1.1"/><rect x="1.6" y="3.6" width="3.6" height="1.1"/></g><path d="M7.3 7.3Q7 6.4 5.6 6.4Q3.9 6.4 3.9 7.6Q3.9 8.6 5.5 8.9Q7.3 9.2 7.3 10.4Q7.3 11.7 5.5 11.7Q4 11.7 3.7 10.7M5.5 5.6v1M5.5 11.6v1" fill="none" stroke="#ffffff" stroke-width="1.15"/></svg>
<div class="t" style="left:266.30px;top:397.12px;font-size:14px;color:#0a1464;font-weight:normal;">FA2105-0037</div>
<svg style="left:450px;top:397px;" width="12" height="14" viewBox="0 0 12 14"><rect x="1" y="0" width="10" height="13" fill="#7673b5"/><rect x="0" y="12.6" width="12" height="1.4" fill="#7673b5"/><g fill="#e6e6f2"><rect x="3" y="1.8" width="1.8" height="1.8"/><rect x="7.2" y="1.8" width="1.8" height="1.8"/><rect x="3" y="5" width="1.8" height="1.8"/><rect x="7.2" y="5" width="1.8" height="1.8"/><rect x="3" y="8.2" width="1.8" height="1.8"/><rect x="7.2" y="8.2" width="1.8" height="1.8"/><rect x="5.1" y="10.3" width="1.8" height="2.6"/></g></svg>
<div class="t" style="left:466.70px;top:397.12px;font-size:14px;color:#0a1464;font-weight:normal;">Société Dream RT</div>
<div class="t" style="left:661.00px;top:397.12px;font-size:14px;color:#222244;font-weight:normal;">A réception</div>
<div class="t" style="right:534.50px;top:397.12px;font-size:14px;color:#0d5f74;font-weight:normal;">5 000,00</div>
<svg style="left:1026px;top:394.88px" width="20" height="20" viewBox="0 0 20 20"><use href="#avg"/></svg>
<div class="t" style="left:1049.50px;top:397.12px;font-size:14px;color:#0a1464;font-weight:normal;">Franck Renaud</div>
<div class="a" style="left:1369px;top:394.18px;width:67.5px;height:22px;border-radius:4px;background:#bc9526"></div>
<div class="t" style="left:1252.70px;width:300px;text-align:center;top:397.12px;font-size:14px;color:#fff;font-weight:bold;letter-spacing:0;">Impayée</div>
<div class="a" style="left:1474px;top:396.88px;width:13px;height:13px;border:1px solid #767676;border-radius:2px;background:#fff"></div>
<svg style="left:251px;top:434px;" width="11" height="14" viewBox="0 0 11 14"><path d="M0 0h7.3L11 3.7V14H0z" fill="#6a9c3b"/><path d="M7.3 0v3.7H11" fill="#ffffd6" opacity="0.55"/><g fill="#ffffd6"><rect x="1.6" y="1.6" width="3.6" height="1.1"/><rect x="1.6" y="3.6" width="3.6" height="1.1"/></g><path d="M7.3 7.3Q7 6.4 5.6 6.4Q3.9 6.4 3.9 7.6Q3.9 8.6 5.5 8.9Q7.3 9.2 7.3 10.4Q7.3 11.7 5.5 11.7Q4 11.7 3.7 10.7M5.5 5.6v1M5.5 11.6v1" fill="none" stroke="#ffffd6" stroke-width="1.15"/></svg>
<div class="t" style="left:266.30px;top:434.97px;font-size:14px;color:#0a1464;font-weight:normal;">FA2012-0032<svg style="position:absolute;left:100%;margin-left:2.7px;top:0.03px" width="15" height="14" viewBox="0 0 15 14"><path d="M5.5 0h4v5.5h3L7.5 10.5 2.5 5.5h3z" fill="#a6a6a6"/><path d="M0 9h4.5l3 3 3-3H15v5H0z" fill="#a6a6a6"/><circle cx="12.5" cy="11.8" r="0.7" fill="#fff"/></svg></div>
<svg style="left:450px;top:435px;" width="12" height="14" viewBox="0 0 12 14"><rect x="1" y="0" width="10" height="13" fill="#7673b5"/><rect x="0" y="12.6" width="12" height="1.4" fill="#7673b5"/><g fill="#e6e6f2"><rect x="3" y="1.8" width="1.8" height="1.8"/><rect x="7.2" y="1.8" width="1.8" height="1.8"/><rect x="3" y="5" width="1.8" height="1.8"/><rect x="7.2" y="5" width="1.8" height="1.8"/><rect x="3" y="8.2" width="1.8" height="1.8"/><rect x="7.2" y="8.2" width="1.8" height="1.8"/><rect x="5.1" y="10.3" width="1.8" height="2.6"/></g></svg>
<div class="t" style="left:466.70px;top:434.97px;font-size:14px;color:#0a1464;font-weight:normal;">Société RO</div>
<div class="t" style="left:661.00px;top:434.97px;font-size:14px;color:#222244;font-weight:normal;">A réception</div>
<div class="t" style="right:534.50px;top:434.97px;font-size:14px;color:#0d5f74;font-weight:normal;">100 000,00</div>
<svg style="left:1026px;top:432.73px" width="20" height="20" viewBox="0 0 20 20"><use href="#avg"/></svg>
<div class="t" style="left:1049.50px;top:434.97px;font-size:14px;color:#0a1464;font-weight:normal;">Franck Renaud</div>
<div class="a" style="left:1384px;top:432.03px;width:52.5px;height:22px;border-radius:4px;background:#cbd0d3"></div>
<div class="t" style="left:1260.50px;width:300px;text-align:center;top:434.97px;font-size:14px;color:#777;font-weight:bold;letter-spacing:0;">Payée</div>
<div class="a" style="left:1474px;top:434.73px;width:13px;height:13px;border-radius:2px;background:#0075ff"></div>
<svg style="left:1474px;top:434.725px;" width="13" height="13" viewBox="0 0 13 13"><path d="M2.6 6.6l2.6 2.6 5.3-5.6" fill="none" stroke="#fff" stroke-width="2"/></svg>
<svg style="left:251px;top:472px;" width="11" height="14" viewBox="0 0 11 14"><path d="M0 0h7.3L11 3.7V14H0z" fill="#6a9c3b"/><path d="M7.3 0v3.7H11" fill="#ffffd6" opacity="0.55"/><g fill="#ffffd6"><rect x="1.6" y="1.6" width="3.6" height="1.1"/><rect x="1.6" y="3.6" width="3.6" height="1.1"/></g><path d="M7.3 7.3Q7 6.4 5.6 6.4Q3.9 6.4 3.9 7.6Q3.9 8.6 5.5 8.9Q7.3 9.2 7.3 10.4Q7.3 11.7 5.5 11.7Q4 11.7 3.7 10.7M5.5 5.6v1M5.5 11.6v1" fill="none" stroke="#ffffd6" stroke-width="1.15"/></svg>
<div class="t" style="left:266.30px;top:472.82px;font-size:14px;color:#0a1464;font-weight:normal;">FA2012-0013<svg style="position:absolute;left:100%;margin-left:2.7px;top:0.18px" width="15" height="14" viewBox="0 0 15 14"><path d="M5.5 0h4v5.5h3L7.5 10.5 2.5 5.5h3z" fill="#a6a6a6"/><path d="M0 9h4.5l3 3 3-3H15v5H0z" fill="#a6a6a6"/><circle cx="12.5" cy="11.8" r="0.7" fill="#fff"/></svg></div>
<svg style="left:450px;top:473px;" width="12" height="14" viewBox="0 0 12 14"><rect x="1" y="0" width="10" height="13" fill="#7673b5"/><rect x="0" y="12.6" width="12" height="1.4" fill="#7673b5"/><g fill="#e6e6f2"><rect x="3" y="1.8" width="1.8" height="1.8"/><rect x="7.2" y="1.8" width="1.8" height="1.8"/><rect x="3" y="5" width="1.8" height="1.8"/><rect x="7.2" y="5" width="1.8" height="1.8"/><rect x="3" y="8.2" width="1.8" height="1.8"/><rect x="7.2" y="8.2" width="1.8" height="1.8"/><rect x="5.1" y="10.3" width="1.8" height="2.6"/></g></svg>
<div class="t" style="left:466.70px;top:472.82px;font-size:14px;color:#0a1464;font-weight:normal;">MC CONSULT</div>
<div class="t" style="left:661.00px;top:472.82px;font-size:14px;color:#222244;font-weight:normal;">A réception</div>
<div class="t" style="right:534.50px;top:472.82px;font-size:14px;color:#0d5f74;font-weight:normal;">5 600,00</div>
<svg style="left:1026px;top:470.57px" width="20" height="20" viewBox="0 0 20 20"><use href="#avg"/></svg>
<div class="t" style="left:1049.50px;top:472.82px;font-size:14px;color:#0a1464;font-weight:normal;">Franck Renaud</div>
<div class="a" style="left:1384px;top:469.88px;width:52.5px;height:22px;border-radius:4px;background:#cbd0d3"></div>
<div class="t" style="left:1260.50px;width:300px;text-align:center;top:472.82px;font-size:14px;color:#777;font-weight:bold;letter-spacing:0;">Payée</div>
<div class="a" style="left:1474px;top:472.57px;width:13px;height:13px;border-radius:2px;background:#0075ff"></div>
<svg style="left:1474px;top:472.575px;" width="13" height="13" viewBox="0 0 13 13"><path d="M2.6 6.6l2.6 2.6 5.3-5.6" fill="none" stroke="#fff" stroke-width="2"/></svg>
<svg style="left:251px;top:510px;" width="11" height="14" viewBox="0 0 11 14"><path d="M0 0h7.3L11 3.7V14H0z" fill="#6a9c3b"/><path d="M7.3 0v3.7H11" fill="#ffffd6" opacity="0.55"/><g fill="#ffffd6"><rect x="1.6" y="1.6" width="3.6" height="1.1"/><rect x="1.6" y="3.6" width="3.6" height="1.1"/></g><path d="M7.3 7.3Q7 6.4 5.6 6.4Q3.9 6.4 3.9 7.6Q3.9 8.6 5.5 8.9Q7.3 9.2 7.3 10.4Q7.3 11.7 5.5 11.7Q4 11.7 3.7 10.7M5.5 5.6v1M5.5 11.6v1" fill="none" stroke="#ffffd6" stroke-width="1.15"/></svg>
<div class="t" style="left:266.30px;top:510.67px;font-size:14px;color:#0a1464;font-weight:normal;">FA2011-0012<svg style="position:absolute;left:100%;margin-left:2.7px;top:0.33px" width="15" height="14" viewBox="0 0 15 14"><path d="M5.5 0h4v5.5h3L7.5 10.5 2.5 5.5h3z" fill="#a6a6a6"/><path d="M0 9h4.5l3 3 3-3H15v5H0z" fill="#a6a6a6"/><circle cx="12.5" cy="11.8" r="0.7" fill="#fff"/></svg></div>
<svg style="left:450px;top:511px;" width="12" height="14" viewBox="0 0 12 14"><rect x="1" y="0" width="10" height="13" fill="#7673b5"/><rect x="0" y="12.6" width="12" height="1.4" fill="#7673b5"/><g fill="#e6e6f2"><rect x="3" y="1.8" width="1.8" height="1.8"/><rect x="7.2" y="1.8" width="1.8" height="1.8"/><rect x="3" y="5" width="1.8" height="1.8"/><rect x="7.2" y="5" width="1.8" height="1.8"/><rect x="3" y="8.2" width="1.8" height="1.8"/><rect x="7.2" y="8.2" width="1.8" height="1.8"/><rect x="5.1" y="10.3" width="1.8" height="2.6"/></g></svg>
<div class="t" style="left:466.70px;top:510.67px;font-size:14px;color:#0a1464;font-weight:normal;">MC CONSULT</div>
<div class="t" style="left:661.00px;top:510.67px;font-size:14px;color:#222244;font-weight:normal;">A réception</div>
<div class="t" style="right:534.50px;top:510.67px;font-size:14px;color:#0d5f74;font-weight:normal;">14 000,00</div>
<svg style="left:1026px;top:508.42px" width="20" height="20" viewBox="0 0 20 20"><use href="#avg"/></svg>
<div class="t" style="left:1049.50px;top:510.67px;font-size:14px;color:#0a1464;font-weight:normal;">Franck Renaud</div>
<div class="a" style="left:1384px;top:507.72px;width:52.5px;height:22px;border-radius:4px;background:#cbd0d3"></div>
<div class="t" style="left:1260.50px;width:300px;text-align:center;top:510.67px;font-size:14px;color:#777;font-weight:bold;letter-spacing:0;">Payée</div>
<div class="a" style="left:1474px;top:510.42px;width:13px;height:13px;border:1px solid #767676;border-radius:2px;background:#fff"></div>
<svg style="left:251px;top:548px;" width="11" height="14" viewBox="0 0 11 14"><path d="M0 0h7.3L11 3.7V14H0z" fill="#6a9c3b"/><path d="M7.3 0v3.7H11" fill="#ffffd6" opacity="0.55"/><g fill="#ffffd6"><rect x="1.6" y="1.6" width="3.6" height="1.1"/><rect x="1.6" y="3.6" width="3.6" height="1.1"/></g><path d="M7.3 7.3Q7 6.4 5.6 6.4Q3.9 6.4 3.9 7.6Q3.9 8.6 5.5 8.9Q7.3 9.2 7.3 10.4Q7.3 11.7 5.5 11.7Q4 11.7 3.7 10.7M5.5 5.6v1M5.5 11.6v1" fill="none" stroke="#ffffd6" stroke-width="1.15"/></svg>
<div class="t" style="left:266.30px;top:548.52px;font-size:14px;color:#0a1464;font-weight:normal;">FA2011-0031<svg style="position:absolute;left:100%;margin-left:2.7px;top:0.48px" width="15" height="14" viewBox="0 0 15 14"><path d="M5.5 0h4v5.5h3L7.5 10.5 2.5 5.5h3z" fill="#a6a6a6"/><path d="M0 9h4.5l3 3 3-3H15v5H0z" fill="#a6a6a6"/><circle cx="12.5" cy="11.8" r="0.7" fill="#fff"/></svg></div>
<svg style="left:450px;top:549px;" width="12" height="14" viewBox="0 0 12 14"><rect x="1" y="0" width="10" height="13" fill="#7673b5"/><rect x="0" y="12.6" width="12" height="1.4" fill="#7673b5"/><g fill="#e6e6f2"><rect x="3" y="1.8" width="1.8" height="1.8"/><rect x="7.2" y="1.8" width="1.8" height="1.8"/><rect x="3" y="5" width="1.8" height="1.8"/><rect x="7.2" y="5" width="1.8" height="1.8"/><rect x="3" y="8.2" width="1.8" height="1.8"/><rect x="7.2" y="8.2" width="1.8" height="1.8"/><rect x="5.1" y="10.3" width="1.8" height="2.6"/></g></svg>
<div class="t" style="left:466.70px;top:548.52px;font-size:14px;color:#0a1464;font-weight:normal;">Société RO</div>
<div class="t" style="left:661.00px;top:548.52px;font-size:14px;color:#222244;font-weight:normal;">A réception</div>
<div class="t" style="right:534.50px;top:548.52px;font-size:14px;color:#0d5f74;font-weight:normal;">30 000,00</div>
<svg style="left:1026px;top:546.27px" width="20" height="20" viewBox="0 0 20 20"><use href="#avg"/></svg>
<div class="t" style="left:1049.50px;top:548.52px;font-size:14px;color:#0a1464;font-weight:normal;">Franck Renaud</div>
<div class="a" style="left:1384px;top:545.57px;width:52.5px;height:22px;border-radius:4px;background:#cbd0d3"></div>
<div class="t" style="left:1260.50px;width:300px;text-align:center;top:548.52px;font-size:14px;color:#777;font-weight:bold;letter-spacing:0;">Payée</div>
<div class="a" style="left:1474px;top:548.27px;width:13px;height:13px;border:1px solid #767676;border-radius:2px;background:#fff"></div>
<svg style="left:251px;top:586px;" width="11" height="14" viewBox="0 0 11 14"><path d="M0 0h7.3L11 3.7V14H0z" fill="#6a9c3b"/><path d="M7.3 0v3.7H11" fill="#ffffd6" opacity="0.55"/><g fill="#ffffd6"><rect x="1.6" y="1.6" width="3.6" height="1.1"/><rect x="1.6" y="3.6" width="3.6" height="1.1"/></g><path d="M7.3 7.3Q7 6.4 5.6 6.4Q3.9 6.4 3.9 7.6Q3.9 8.6 5.5 8.9Q7.3 9.2 7.3 10.4Q7.3 11.7 5.5 11.7Q4 11.7 3.7 10.7M5.5 5.6v1M5.5 11.6v1" fill="none" stroke="#ffffd6" stroke-width="1.15"/></svg>
<div class="t" style="left:266.30px;top:586.37px;font-size:14px;color:#0a1464;font-weight:normal;">FA2010-0033<svg style="position:absolute;left:100%;margin-left:2.7px;top:0.63px" width="15" height="14" viewBox="0 0 15 14"><path d="M5.5 0h4v5.5h3L7.5 10.5 2.5 5.5h3z" fill="#a6a6a6"/><path d="M0 9h4.5l3 3 3-3H15v5H0z" fill="#a6a6a6"/><circle cx="12.5" cy="11.8" r="0.7" fill="#fff"/></svg></div>
<svg style="left:450px;top:587px;" width="12" height="14" viewBox="0 0 12 14"><rect x="1" y="0" width="10" height="13" fill="#7673b5"/><rect x="0" y="12.6" width="12" height="1.4" fill="#7673b5"/><g fill="#e6e6f2"><rect x="3" y="1.8" width="1.8" height="1.8"/><rect x="7.2" y="1.8" width="1.8" height="1.8"/><rect x="3" y="5" width="1.8" height="1.8"/><rect x="7.2" y="5" width="1.8" height="1.8"/><rect x="3" y="8.2" width="1.8" height="1.8"/><rect x="7.2" y="8.2" width="1.8" height="1.8"/><rect x="5.1" y="10.3" width="1.8" height="2.6"/></g></svg>
<div class="t" style="left:466.70px;top:586.37px;font-size:14px;color:#0a1464;font-weight:normal;">Société RO</div>
<div class="t" style="left:661.00px;top:586.37px;font-size:14px;color:#222244;font-weight:normal;">A réception</div>
<div class="t" style="right:534.50px;top:586.37px;font-size:14px;color:#0d5f74;font-weight:normal;">18 000,00</div>
<svg style="left:1026px;top:584.12px" width="20" height="20" viewBox="0 0 20 20"><use href="#avg"/></svg>
<div class="t" style="left:1049.50px;top:586.37px;font-size:14px;color:#0a1464;font-weight:normal;">Franck Renaud</div>
<div class="a" style="left:1384px;top:583.42px;width:52.5px;height:22px;border-radius:4px;background:#cbd0d3"></div>
<div class="t" style="left:1260.50px;width:300px;text-align:center;top:586.37px;font-size:14px;color:#777;font-weight:bold;letter-spacing:0;">Payée</div>
<div class="a" style="left:1474px;top:586.12px;width:13px;height:13px;border:1px solid #767676;border-radius:2px;background:#fff"></div>
<svg style="left:251px;top:623px;" width="11" height="14" viewBox="0 0 11 14"><path d="M0 0h7.3L11 3.7V14H0z" fill="#6a9c3b"/><path d="M7.3 0v3.7H11" fill="#ffffd6" opacity="0.55"/><g fill="#ffffd6"><rect x="1.6" y="1.6" width="3.6" height="1.1"/><rect x="1.6" y="3.6" width="3.6" height="1.1"/></g><path d="M7.3 7.3Q7 6.4 5.6 6.4Q3.9 6.4 3.9 7.6Q3.9 8.6 5.5 8.9Q7.3 9.2 7.3 10.4Q7.3 11.7 5.5 11.7Q4 11.7 3.7 10.7M5.5 5.6v1M5.5 11.6v1" fill="none" stroke="#ffffd6" stroke-width="1.15"/></svg>
<div class="t" style="left:266.30px;top:624.22px;font-size:14px;color:#0a1464;font-weight:normal;">FA2010-0025<svg style="position:absolute;left:100%;margin-left:2.7px;top:-0.22px" width="15" height="14" viewBox="0 0 15 14"><path d="M5.5 0h4v5.5h3L7.5 10.5 2.5 5.5h3z" fill="#a6a6a6"/><path d="M0 9h4.5l3 3 3-3H15v5H0z" fill="#a6a6a6"/><circle cx="12.5" cy="11.8" r="0.7" fill="#fff"/></svg></div>
<svg style="left:450px;top:624px;" width="12" height="14" viewBox="0 0 12 14"><rect x="1" y="0" width="10" height="13" fill="#7673b5"/><rect x="0" y="12.6" width="12" height="1.4" fill="#7673b5"/><g fill="#e6e6f2"><rect x="3" y="1.8" width="1.8" height="1.8"/><rect x="7.2" y="1.8" width="1.8" height="1.8"/><rect x="3" y="5" width="1.8" height="1.8"/><rect x="7.2" y="5" width="1.8" height="1.8"/><rect x="3" y="8.2" width="1.8" height="1.8"/><rect x="7.2" y="8.2" width="1.8" height="1.8"/><rect x="5.1" y="10.3" width="1.8" height="2.6"/></g></svg>
<div class="t" style="left:466.70px;top:624.22px;font-size:14px;color:#0a1464;font-weight:normal;">Société Dream RT</div>
<div class="t" style="left:661.00px;top:624.22px;font-size:14px;color:#222244;font-weight:normal;">A réception</div>
<div class="t" style="right:534.50px;top:624.22px;font-size:14px;color:#0d5f74;font-weight:normal;">6 400,00</div>
<svg style="left:1026px;top:621.97px" width="20" height="20" viewBox="0 0 20 20"><use href="#avg"/></svg>
<div class="t" style="left:1049.50px;top:624.22px;font-size:14px;color:#0a1464;font-weight:normal;">Franck Renaud</div>
<div class="a" style="left:1384px;top:621.27px;width:52.5px;height:22px;border-radius:4px;background:#cbd0d3"></div>
<div class="t" style="left:1260.50px;width:300px;text-align:center;top:624.22px;font-size:14px;color:#777;font-weight:bold;letter-spacing:0;">Payée</div>
<div class="a" style="left:1474px;top:623.97px;width:13px;height:13px;border:1px solid #767676;border-radius:2px;background:#fff"></div>
<svg style="left:251px;top:661px;" width="11" height="14" viewBox="0 0 11 14"><path d="M0 0h7.3L11 3.7V14H0z" fill="#6a9c3b"/><path d="M7.3 0v3.7H11" fill="#ffffd6" opacity="0.55"/><g fill="#ffffd6"><rect x="1.6" y="1.6" width="3.6" height="1.1"/><rect x="1.6" y="3.6" width="3.6" height="1.1"/></g><path d="M7.3 7.3Q7 6.4 5.6 6.4Q3.9 6.4 3.9 7.6Q3.9 8.6 5.5 8.9Q7.3 9.2 7.3 10.4Q7.3 11.7 5.5 11.7Q4 11.7 3.7 10.7M5.5 5.6v1M5.5 11.6v1" fill="none" stroke="#ffffd6" stroke-width="1.15"/></svg>
<div class="t" style="left:266.30px;top:662.07px;font-size:14px;color:#0a1464;font-weight:normal;">FA2010-0019<svg style="position:absolute;left:100%;margin-left:2.7px;top:-0.07px" width="15" height="14" viewBox="0 0 15 14"><path d="M5.5 0h4v5.5h3L7.5 10.5 2.5 5.5h3z" fill="#a6a6a6"/><path d="M0 9h4.5l3 3 3-3H15v5H0z" fill="#a6a6a6"/><circle cx="12.5" cy="11.8" r="0.7" fill="#fff"/></svg></div>
<svg style="left:450px;top:662px;" width="12" height="14" viewBox="0 0 12 14"><rect x="1" y="0" width="10" height="13" fill="#7673b5"/><rect x="0" y="12.6" width="12" height="1.4" fill="#7673b5"/><g fill="#e6e6f2"><rect x="3" y="1.8" width="1.8" height="1.8"/><rect x="7.2" y="1.8" width="1.8" height="1.8"/><rect x="3" y="5" width="1.8" height="1.8"/><rect x="7.2" y="5" width="1.8" height="1.8"/><rect x="3" y="8.2" width="1.8" height="1.8"/><rect x="7.2" y="8.2" width="1.8" height="1.8"/><rect x="5.1" y="10.3" width="1.8" height="2.6"/></g></svg>
<div class="t" style="left:466.70px;top:662.07px;font-size:14px;color:#0a1464;font-weight:normal;">MC CONSULT</div>
<div class="t" style="left:661.00px;top:662.07px;font-size:14px;color:#222244;font-weight:normal;">A réception</div>
<div class="t" style="right:534.50px;top:662.07px;font-size:14px;color:#0d5f74;font-weight:normal;">8 000,00</div>
<svg style="left:1026px;top:659.83px" width="20" height="20" viewBox="0 0 20 20"><use href="#avg"/></svg>
<div class="t" style="left:1049.50px;top:662.07px;font-size:14px;color:#0a1464;font-weight:normal;">Franck Renaud</div>
<div class="a" style="left:1384px;top:659.12px;width:52.5px;height:22px;border-radius:4px;background:#cbd0d3"></div>
<div class="t" style="left:1260.50px;width:300px;text-align:center;top:662.07px;font-size:14px;color:#777;font-weight:bold;letter-spacing:0;">Payée</div>
<div class="a" style="left:1474px;top:661.83px;width:13px;height:13px;border:1px solid #767676;border-radius:2px;background:#fff"></div>
<svg style="left:251px;top:699px;" width="11" height="14" viewBox="0 0 11 14"><path d="M0 0h7.3L11 3.7V14H0z" fill="#6a9c3b"/><path d="M7.3 0v3.7H11" fill="#ffffd6" opacity="0.55"/><g fill="#ffffd6"><rect x="1.6" y="1.6" width="3.6" height="1.1"/><rect x="1.6" y="3.6" width="3.6" height="1.1"/></g><path d="M7.3 7.3Q7 6.4 5.6 6.4Q3.9 6.4 3.9 7.6Q3.9 8.6 5.5 8.9Q7.3 9.2 7.3 10.4Q7.3 11.7 5.5 11.7Q4 11.7 3.7 10.7M5.5 5.6v1M5.5 11.6v1" fill="none" stroke="#ffffd6" stroke-width="1.15"/></svg>
<div class="t" style="left:266.30px;top:699.92px;font-size:14px;color:#0a1464;font-weight:normal;">FA2008-0030<svg style="position:absolute;left:100%;margin-left:2.7px;top:0.08px" width="15" height="14" viewBox="0 0 15 14"><path d="M5.5 0h4v5.5h3L7.5 10.5 2.5 5.5h3z" fill="#a6a6a6"/><path d="M0 9h4.5l3 3 3-3H15v5H0z" fill="#a6a6a6"/><circle cx="12.5" cy="11.8" r="0.7" fill="#fff"/></svg></div>
<svg style="left:450px;top:700px;" width="12" height="14" viewBox="0 0 12 14"><rect x="1" y="0" width="10" height="13" fill="#7673b5"/><rect x="0" y="12.6" width="12" height="1.4" fill="#7673b5"/><g fill="#e6e6f2"><rect x="3" y="1.8" width="1.8" height="1.8"/><rect x="7.2" y="1.8" width="1.8" height="1.8"/><rect x="3" y="5" width="1.8" height="1.8"/><rect x="7.2" y="5" width="1.8" height="1.8"/><rect x="3" y="8.2" width="1.8" height="1.8"/><rect x="7.2" y="8.2" width="1.8" height="1.8"/><rect x="5.1" y="10.3" width="1.8" height="2.6"/></g></svg>
<div class="t" style="left:466.70px;top:699.92px;font-size:14px;color:#0a1464;font-weight:normal;">Société RO</div>
<div class="t" style="left:661.00px;top:699.92px;font-size:14px;color:#222244;font-weight:normal;">A réception</div>
<div class="t" style="right:534.50px;top:699.92px;font-size:14px;color:#0d5f74;font-weight:normal;">500 000,00</div>
<svg style="left:1026px;top:697.67px" width="20" height="20" viewBox="0 0 20 20"><use href="#avg"/></svg>
<div class="t" style="left:1049.50px;top:699.92px;font-size:14px;color:#0a1464;font-weight:normal;">Franck Renaud</div>
<div class="a" style="left:1384px;top:696.97px;width:52.5px;height:22px;border-radius:4px;background:#cbd0d3"></div>
<div class="t" style="left:1260.50px;width:300px;text-align:center;top:699.92px;font-size:14px;color:#777;font-weight:bold;letter-spacing:0;">Payée</div>
<div class="a" style="left:1474px;top:699.67px;width:13px;height:13px;border:1px solid #767676;border-radius:2px;background:#fff"></div>
<svg style="left:251px;top:737px;" width="11" height="14" viewBox="0 0 11 14"><path d="M0 0h7.3L11 3.7V14H0z" fill="#6a9c3b"/><path d="M7.3 0v3.7H11" fill="#f9f9f9" opacity="0.55"/><g fill="#f9f9f9"><rect x="1.6" y="1.6" width="3.6" height="1.1"/><rect x="1.6" y="3.6" width="3.6" height="1.1"/></g><path d="M7.3 7.3Q7 6.4 5.6 6.4Q3.9 6.4 3.9 7.6Q3.9 8.6 5.5 8.9Q7.3 9.2 7.3 10.4Q7.3 11.7 5.5 11.7Q4 11.7 3.7 10.7M5.5 5.6v1M5.5 11.6v1" fill="none" stroke="#f9f9f9" stroke-width="1.15"/></svg>
<div class="t" style="left:266.30px;top:737.77px;font-size:14px;color:#0a1464;font-weight:normal;">FA2008-0026<svg style="position:absolute;left:100%;margin-left:2.7px;top:0.23px" width="15" height="14" viewBox="0 0 15 14"><path d="M5.5 0h4v5.5h3L7.5 10.5 2.5 5.5h3z" fill="#a6a6a6"/><path d="M0 9h4.5l3 3 3-3H15v5H0z" fill="#a6a6a6"/><circle cx="12.5" cy="11.8" r="0.7" fill="#fff"/></svg></div>
<svg style="left:450px;top:738px;" width="12" height="14" viewBox="0 0 12 14"><rect x="1" y="0" width="10" height="13" fill="#7673b5"/><rect x="0" y="12.6" width="12" height="1.4" fill="#7673b5"/><g fill="#e6e6f2"><rect x="3" y="1.8" width="1.8" height="1.8"/><rect x="7.2" y="1.8" width="1.8" height="1.8"/><rect x="3" y="5" width="1.8" height="1.8"/><rect x="7.2" y="5" width="1.8" height="1.8"/><rect x="3" y="8.2" width="1.8" height="1.8"/><rect x="7.2" y="8.2" width="1.8" height="1.8"/><rect x="5.1" y="10.3" width="1.8" height="2.6"/></g></svg>
<div class="t" style="left:466.70px;top:737.77px;font-size:14px;color:#0a1464;font-weight:normal;">Société Dream RT</div>
<div class="t" style="left:661.00px;top:737.77px;font-size:14px;color:#222244;font-weight:normal;">A réception</div>
<div class="t" style="right:534.50px;top:737.77px;font-size:14px;color:#0d5f74;font-weight:normal;">29 000,00</div>
<svg style="left:1026px;top:735.52px" width="20" height="20" viewBox="0 0 20 20"><use href="#avg"/></svg>
<div class="t" style="left:1049.50px;top:737.77px;font-size:14px;color:#0a1464;font-weight:normal;">Franck Renaud</div>
<div class="a" style="left:1384px;top:734.82px;width:52.5px;height:22px;border-radius:4px;background:#cbd0d3"></div>
<div class="t" style="left:1260.50px;width:300px;text-align:center;top:737.77px;font-size:14px;color:#777;font-weight:bold;letter-spacing:0;">Payée</div>
<div class="a" style="left:1474px;top:737.52px;width:13px;height:13px;border:1px solid #767676;border-radius:2px;background:#fff"></div>
<svg style="left:251px;top:775px;" width="11" height="14" viewBox="0 0 11 14"><path d="M0 0h7.3L11 3.7V14H0z" fill="#6a9c3b"/><path d="M7.3 0v3.7H11" fill="#ffffff" opacity="0.55"/><g fill="#ffffff"><rect x="1.6" y="1.6" width="3.6" height="1.1"/><rect x="1.6" y="3.6" width="3.6" height="1.1"/></g><path d="M7.3 7.3Q7 6.4 5.6 6.4Q3.9 6.4 3.9 7.6Q3.9 8.6 5.5 8.9Q7.3 9.2 7.3 10.4Q7.3 11.7 5.5 11.7Q4 11.7 3.7 10.7M5.5 5.6v1M5.5 11.6v1" fill="none" stroke="#ffffff" stroke-width="1.15"/></svg>
<div class="t" style="left:266.30px;top:775.62px;font-size:14px;color:#0a1464;font-weight:normal;">FA2008-0024<svg style="position:absolute;left:100%;margin-left:2.7px;top:0.38px" width="15" height="14" viewBox="0 0 15 14"><path d="M5.5 0h4v5.5h3L7.5 10.5 2.5 5.5h3z" fill="#a6a6a6"/><path d="M0 9h4.5l3 3 3-3H15v5H0z" fill="#a6a6a6"/><circle cx="12.5" cy="11.8" r="0.7" fill="#fff"/></svg></div>
<svg style="left:450px;top:776px;" width="12" height="14" viewBox="0 0 12 14"><rect x="1" y="0" width="10" height="13" fill="#7673b5"/><rect x="0" y="12.6" width="12" height="1.4" fill="#7673b5"/><g fill="#e6e6f2"><rect x="3" y="1.8" width="1.8" height="1.8"/><rect x="7.2" y="1.8" width="1.8" height="1.8"/><rect x="3" y="5" width="1.8" height="1.8"/><rect x="7.2" y="5" width="1.8" height="1.8"/><rect x="3" y="8.2" width="1.8" height="1.8"/><rect x="7.2" y="8.2" width="1.8" height="1.8"/><rect x="5.1" y="10.3" width="1.8" height="2.6"/></g></svg>
<div class="t" style="left:466.70px;top:775.62px;font-size:14px;color:#0a1464;font-weight:normal;">Société Dream RT</div>
<div class="t" style="left:661.00px;top:775.62px;font-size:14px;color:#222244;font-weight:normal;">A réception</div>
<div class="t" style="right:534.50px;top:775.62px;font-size:14px;color:#0d5f74;font-weight:normal;">29 500,00</div>
<svg style="left:1026px;top:773.38px" width="20" height="20" viewBox="0 0 20 20"><use href="#avg"/></svg>
<div class="t" style="left:1049.50px;top:775.62px;font-size:14px;color:#0a1464;font-weight:normal;">Franck Renaud</div>
<div class="a" style="left:1369px;top:772.67px;width:67.5px;height:22px;border-radius:4px;background:#bc9526"></div>
<div class="t" style="left:1252.70px;width:300px;text-align:center;top:775.62px;font-size:14px;color:#fff;font-weight:bold;letter-spacing:0;">Impayée</div>
<div class="a" style="left:1474px;top:775.38px;width:13px;height:13px;border:1px solid #767676;border-radius:2px;background:#fff"></div>
<svg style="left:251px;top:813px;" width="11" height="14" viewBox="0 0 11 14"><path d="M0 0h7.3L11 3.7V14H0z" fill="#6a9c3b"/><path d="M7.3 0v3.7H11" fill="#f9f9f9" opacity="0.55"/><g fill="#f9f9f9"><rect x="1.6" y="1.6" width="3.6" height="1.1"/><rect x="1.6" y="3.6" width="3.6" height="1.1"/></g><path d="M7.3 7.3Q7 6.4 5.6 6.4Q3.9 6.4 3.9 7.6Q3.9 8.6 5.5 8.9Q7.3 9.2 7.3 10.4Q7.3 11.7 5.5 11.7Q4 11.7 3.7 10.7M5.5 5.6v1M5.5 11.6v1" fill="none" stroke="#f9f9f9" stroke-width="1.15"/></svg>
<div class="t" style="left:266.30px;top:813.47px;font-size:14px;color:#0a1464;font-weight:normal;">FA2008-0018<svg style="position:absolute;left:100%;margin-left:2.7px;top:0.53px" width="15" height="14" viewBox="0 0 15 14"><path d="M5.5 0h4v5.5h3L7.5 10.5 2.5 5.5h3z" fill="#a6a6a6"/><path d="M0 9h4.5l3 3 3-3H15v5H0z" fill="#a6a6a6"/><circle cx="12.5" cy="11.8" r="0.7" fill="#fff"/></svg></div>
<svg style="left:450px;top:814px;" width="12" height="14" viewBox="0 0 12 14"><rect x="1" y="0" width="10" height="13" fill="#7673b5"/><rect x="0" y="12.6" width="12" height="1.4" fill="#7673b5"/><g fill="#e6e6f2"><rect x="3" y="1.8" width="1.8" height="1.8"/><rect x="7.2" y="1.8" width="1.8" height="1.8"/><rect x="3" y="5" width="1.8" height="1.8"/><rect x="7.2" y="5" width="1.8" height="1.8"/><rect x="3" y="8.2" width="1.8" height="1.8"/><rect x="7.2" y="8.2" width="1.8" height="1.8"/><rect x="5.1" y="10.3" width="1.8" height="2.6"/></g></svg>
<div class="t" style="left:466.70px;top:813.47px;font-size:14px;color:#0a1464;font-weight:normal;">MC CONSULT</div>
<div class="t" style="left:661.00px;top:813.47px;font-size:14px;color:#222244;font-weight:normal;">A réception</div>
<div class="t" style="right:534.50px;top:813.47px;font-size:14px;color:#0d5f74;font-weight:normal;">1 000,00</div>
<svg style="left:1026px;top:811.23px" width="20" height="20" viewBox="0 0 20 20"><use href="#avg"/></svg>
<div class="t" style="left:1049.50px;top:813.47px;font-size:14px;color:#0a1464;font-weight:normal;">Franck Renaud</div>
<div class="a" style="left:1384px;top:810.52px;width:52.5px;height:22px;border-radius:4px;background:#cbd0d3"></div>
<div class="t" style="left:1260.50px;width:300px;text-align:center;top:813.47px;font-size:14px;color:#777;font-weight:bold;letter-spacing:0;">Payée</div>
<div class="a" style="left:1474px;top:813.23px;width:13px;height:13px;border:1px solid #767676;border-radius:2px;background:#fff"></div>
<svg style="left:251px;top:851px;" width="11" height="14" viewBox="0 0 11 14"><path d="M0 0h7.3L11 3.7V14H0z" fill="#6a9c3b"/><path d="M7.3 0v3.7H11" fill="#ffffff" opacity="0.55"/><g fill="#ffffff"><rect x="1.6" y="1.6" width="3.6" height="1.1"/><rect x="1.6" y="3.6" width="3.6" height="1.1"/></g><path d="M7.3 7.3Q7 6.4 5.6 6.4Q3.9 6.4 3.9 7.6Q3.9 8.6 5.5 8.9Q7.3 9.2 7.3 10.4Q7.3 11.7 5.5 11.7Q4 11.7 3.7 10.7M5.5 5.6v1M5.5 11.6v1" fill="none" stroke="#ffffff" stroke-width="1.15"/></svg>
<div class="t" style="left:266.30px;top:851.32px;font-size:14px;color:#0a1464;font-weight:normal;">FA2007-0027<svg style="position:absolute;left:100%;margin-left:2.7px;top:0.68px" width="15" height="14" viewBox="0 0 15 14"><path d="M5.5 0h4v5.5h3L7.5 10.5 2.5 5.5h3z" fill="#a6a6a6"/><path d="M0 9h4.5l3 3 3-3H15v5H0z" fill="#a6a6a6"/><circle cx="12.5" cy="11.8" r="0.7" fill="#fff"/></svg></div>
<svg style="left:450px;top:852px;" width="12" height="14" viewBox="0 0 12 14"><rect x="1" y="0" width="10" height="13" fill="#7673b5"/><rect x="0" y="12.6" width="12" height="1.4" fill="#7673b5"/><g fill="#e6e6f2"><rect x="3" y="1.8" width="1.8" height="1.8"/><rect x="7.2" y="1.8" width="1.8" height="1.8"/><rect x="3" y="5" width="1.8" height="1.8"/><rect x="7.2" y="5" width="1.8" height="1.8"/><rect x="3" y="8.2" width="1.8" height="1.8"/><rect x="7.2" y="8.2" width="1.8" height="1.8"/><rect x="5.1" y="10.3" width="1.8" height="2.6"/></g></svg>
<div class="t" style="left:466.70px;top:851.32px;font-size:14px;color:#0a1464;font-weight:normal;">Société RO</div>
<div class="t" style="left:661.00px;top:851.32px;font-size:14px;color:#222244;font-weight:normal;">A réception</div>
<div class="t" style="right:534.50px;top:851.32px;font-size:14px;color:#0d5f74;font-weight:normal;">18 000,00</div>
<svg style="left:1026px;top:849.08px" width="20" height="20" viewBox="0 0 20 20"><use href="#avg"/></svg>
<div class="t" style="left:1049.50px;top:851.32px;font-size:14px;color:#0a1464;font-weight:normal;">Franck Renaud</div>
<div class="a" style="left:1384px;top:848.38px;width:52.5px;height:22px;border-radius:4px;background:#cbd0d3"></div>
<div class="t" style="left:1260.50px;width:300px;text-align:center;top:851.32px;font-size:14px;color:#777;font-weight:bold;letter-spacing:0;">Payée</div>
<div class="a" style="left:1474px;top:851.08px;width:13px;height:13px;border:1px solid #767676;border-radius:2px;background:#fff"></div>
<svg style="left:251px;top:888px;" width="11" height="14" viewBox="0 0 11 14"><path d="M0 0h7.3L11 3.7V14H0z" fill="#6a9c3b"/><path d="M7.3 0v3.7H11" fill="#f9f9f9" opacity="0.55"/><g fill="#f9f9f9"><rect x="1.6" y="1.6" width="3.6" height="1.1"/><rect x="1.6" y="3.6" width="3.6" height="1.1"/></g><path d="M7.3 7.3Q7 6.4 5.6 6.4Q3.9 6.4 3.9 7.6Q3.9 8.6 5.5 8.9Q7.3 9.2 7.3 10.4Q7.3 11.7 5.5 11.7Q4 11.7 3.7 10.7M5.5 5.6v1M5.5 11.6v1" fill="none" stroke="#f9f9f9" stroke-width="1.15"/></svg>
<div class="t" style="left:266.30px;top:889.17px;font-size:14px;color:#0a1464;font-weight:normal;">FA2007-0011<svg style="position:absolute;left:100%;margin-left:2.7px;top:-0.17px" width="15" height="14" viewBox="0 0 15 14"><path d="M5.5 0h4v5.5h3L7.5 10.5 2.5 5.5h3z" fill="#a6a6a6"/><path d="M0 9h4.5l3 3 3-3H15v5H0z" fill="#a6a6a6"/><circle cx="12.5" cy="11.8" r="0.7" fill="#fff"/></svg></div>
<svg style="left:450px;top:889px;" width="12" height="14" viewBox="0 0 12 14"><rect x="1" y="0" width="10" height="13" fill="#7673b5"/><rect x="0" y="12.6" width="12" height="1.4" fill="#7673b5"/><g fill="#e6e6f2"><rect x="3" y="1.8" width="1.8" height="1.8"/><rect x="7.2" y="1.8" width="1.8" height="1.8"/><rect x="3" y="5" width="1.8" height="1.8"/><rect x="7.2" y="5" width="1.8" height="1.8"/><rect x="3" y="8.2" width="1.8" height="1.8"/><rect x="7.2" y="8.2" width="1.8" height="1.8"/><rect x="5.1" y="10.3" width="1.8" height="2.6"/></g></svg>
<div class="t" style="left:466.70px;top:889.17px;font-size:14px;color:#0a1464;font-weight:normal;">Société Dream RT</div>
<div class="t" style="left:661.00px;top:889.17px;font-size:14px;color:#222244;font-weight:normal;">A réception</div>
<div class="t" style="right:534.50px;top:889.17px;font-size:14px;color:#0d5f74;font-weight:normal;">1 808,00</div>
<svg style="left:1026px;top:886.92px" width="20" height="20" viewBox="0 0 20 20"><use href="#avg"/></svg>
<div class="t" style="left:1049.50px;top:889.17px;font-size:14px;color:#0a1464;font-weight:normal;">Franck Renaud</div>
<div class="a" style="left:1369px;top:886.22px;width:67.5px;height:22px;border-radius:4px;background:#bc9526"></div>
<div class="t" style="left:1252.70px;width:300px;text-align:center;top:889.17px;font-size:14px;color:#fff;font-weight:bold;letter-spacing:0;">Impayée</div>
<div class="a" style="left:1474px;top:888.92px;width:13px;height:13px;border:1px solid #767676;border-radius:2px;background:#fff"></div>
<svg style="left:251px;top:926px;" width="11" height="14" viewBox="0 0 11 14"><path d="M0 0h7.3L11 3.7V14H0z" fill="#6a9c3b"/><path d="M7.3 0v3.7H11" fill="#ffffff" opacity="0.55"/><g fill="#ffffff"><rect x="1.6" y="1.6" width="3.6" height="1.1"/><rect x="1.6" y="3.6" width="3.6" height="1.1"/></g><path d="M7.3 7.3Q7 6.4 5.6 6.4Q3.9 6.4 3.9 7.6Q3.9 8.6 5.5 8.9Q7.3 9.2 7.3 10.4Q7.3 11.7 5.5 11.7Q4 11.7 3.7 10.7M5.5 5.6v1M5.5 11.6v1" fill="none" stroke="#ffffff" stroke-width="1.15"/></svg>
<div class="t" style="left:266.30px;top:927.02px;font-size:14px;color:#0a1464;font-weight:normal;">FA2007-0010<svg style="position:absolute;left:100%;margin-left:2.7px;top:-0.02px" width="15" height="14" viewBox="0 0 15 14"><path d="M5.5 0h4v5.5h3L7.5 10.5 2.5 5.5h3z" fill="#a6a6a6"/><path d="M0 9h4.5l3 3 3-3H15v5H0z" fill="#a6a6a6"/><circle cx="12.5" cy="11.8" r="0.7" fill="#fff"/></svg></div>
<svg style="left:450px;top:927px;" width="12" height="14" viewBox="0 0 12 14"><rect x="1" y="0" width="10" height="13" fill="#7673b5"/><rect x="0" y="12.6" width="12" height="1.4" fill="#7673b5"/><g fill="#e6e6f2"><rect x="3" y="1.8" width="1.8" height="1.8"/><rect x="7.2" y="1.8" width="1.8" height="1.8"/><rect x="3" y="5" width="1.8" height="1.8"/><rect x="7.2" y="5" width="1.8" height="1.8"/><rect x="3" y="8.2" width="1.8" height="1.8"/><rect x="7.2" y="8.2" width="1.8" height="1.8"/><rect x="5.1" y="10.3" width="1.8" height="2.6"/></g></svg>
<div class="t" style="left:466.70px;top:927.02px;font-size:14px;color:#0a1464;font-weight:normal;">Société TEM</div>
<div class="t" style="left:661.00px;top:927.02px;font-size:14px;color:#222244;font-weight:normal;">A réception</div>
<div class="t" style="right:534.50px;top:927.02px;font-size:14px;color:#0d5f74;font-weight:normal;">11 600,00</div>
<svg style="left:1026px;top:924.77px" width="20" height="20" viewBox="0 0 20 20"><use href="#avg"/></svg>
<div class="t" style="left:1049.50px;top:927.02px;font-size:14px;color:#0a1464;font-weight:normal;">Franck Renaud</div>
<div class="a" style="left:1369px;top:924.07px;width:67.5px;height:22px;border-radius:4px;background:#bc9526"></div>
<div class="t" style="left:1252.70px;width:300px;text-align:center;top:927.02px;font-size:14px;color:#fff;font-weight:bold;letter-spacing:0;">Impayée</div>
<div class="a" style="left:1474px;top:926.77px;width:13px;height:13px;border:1px solid #767676;border-radius:2px;background:#fff"></div>
<svg style="left:251px;top:964px;" width="11" height="14" viewBox="0 0 11 14"><path d="M0 0h7.3L11 3.7V14H0z" fill="#6a9c3b"/><path d="M7.3 0v3.7H11" fill="#f9f9f9" opacity="0.55"/><g fill="#f9f9f9"><rect x="1.6" y="1.6" width="3.6" height="1.1"/><rect x="1.6" y="3.6" width="3.6" height="1.1"/></g><path d="M7.3 7.3Q7 6.4 5.6 6.4Q3.9 6.4 3.9 7.6Q3.9 8.6 5.5 8.9Q7.3 9.2 7.3 10.4Q7.3 11.7 5.5 11.7Q4 11.7 3.7 10.7M5.5 5.6v1M5.5 11.6v1" fill="none" stroke="#f9f9f9" stroke-width="1.15"/></svg>
<div class="t" style="left:266.30px;top:964.87px;font-size:14px;color:#0a1464;font-weight:normal;">FA2006-0009<svg style="position:absolute;left:100%;margin-left:2.7px;top:0.13px" width="15" height="14" viewBox="0 0 15 14"><path d="M5.5 0h4v5.5h3L7.5 10.5 2.5 5.5h3z" fill="#a6a6a6"/><path d="M0 9h4.5l3 3 3-3H15v5H0z" fill="#a6a6a6"/><circle cx="12.5" cy="11.8" r="0.7" fill="#fff"/></svg></div>
<svg style="left:450px;top:965px;" width="12" height="14" viewBox="0 0 12 14"><rect x="1" y="0" width="10" height="13" fill="#7673b5"/><rect x="0" y="12.6" width="12" height="1.4" fill="#7673b5"/><g fill="#e6e6f2"><rect x="3" y="1.8" width="1.8" height="1.8"/><rect x="7.2" y="1.8" width="1.8" height="1.8"/><rect x="3" y="5" width="1.8" height="1.8"/><rect x="7.2" y="5" width="1.8" height="1.8"/><rect x="3" y="8.2" width="1.8" height="1.8"/><rect x="7.2" y="8.2" width="1.8" height="1.8"/><rect x="5.1" y="10.3" width="1.8" height="2.6"/></g></svg>
<div class="t" style="left:466.70px;top:964.87px;font-size:14px;color:#0a1464;font-weight:normal;">Société RT</div>
<div class="t" style="left:661.00px;top:964.87px;font-size:14px;color:#222244;font-weight:normal;">A réception</div>
<div class="t" style="right:534.50px;top:964.87px;font-size:14px;color:#0d5f74;font-weight:normal;">10 800,00</div>
<svg style="left:1026px;top:962.62px" width="20" height="20" viewBox="0 0 20 20"><use href="#avg"/></svg>
<div class="t" style="left:1049.50px;top:964.87px;font-size:14px;color:#0a1464;font-weight:normal;">Franck Renaud</div>
<div class="a" style="left:1384px;top:961.92px;width:52.5px;height:22px;border-radius:4px;background:#cbd0d3"></div>
<div class="t" style="left:1260.50px;width:300px;text-align:center;top:964.87px;font-size:14px;color:#777;font-weight:bold;letter-spacing:0;">Payée</div>
<div class="a" style="left:1474px;top:964.62px;width:13px;height:13px;border:1px solid #767676;border-radius:2px;background:#fff"></div>
<div class="a" style="left:613px;top:138px;width:257px;height:322.5px;background:#fff;border:1px solid #aaa;border-top-color:#ccc;border-radius:0 0 4px 4px;box-shadow:0 1px 2px rgba(0,0,0,0.08)"></div>
<div class="a" style="left:625px;top:152px;width:1px;height:15px;background:#000;"></div>
<div class="a" style="left:621px;top:174px;width:241px;height:1px;background:#c8c8c8;"></div>
<div class="a" style="left:617px;top:180px;width:249px;height:32px;background:#dddddd;"></div>
<div class="t" style="left:622.00px;top:189.15px;font-size:14px;color:#000;font-weight:normal;">-- Sélectionner l'action --</div>
<svg style="left:622.5px;top:221.5px;" width="14" height="11" viewBox="0 0 14 11"><path d="M1.2 5.6l3.8 3.8L12.8 1.4" fill="none" stroke="#2e9b6e" stroke-width="2.8"/></svg>
<div class="t" style="left:642.70px;top:220.65px;font-size:14px;color:#000;font-weight:normal;">Valider</div>
<svg style="left:622.5px;top:252.5px;" width="11" height="14" viewBox="0 0 11 14"><path d="M0.7 0.7h6.3l3.3 3.3v9.3H0.7z" fill="#fff" stroke="#1a1a40" stroke-width="1.4"/><path d="M6.8 0.7v3.5h3.5" fill="none" stroke="#1a1a40" stroke-width="1.1"/><path d="M3 11.5c1-2.5 2-5 2.2-7 0.3 2 1.5 3.5 3 4.5-2-0.2-4 0.8-5.2 2.5z" fill="none" stroke="#1a1a40" stroke-width="0.9"/></svg>
<div class="t" style="left:642.70px;top:253.05px;font-size:14px;color:#000;font-weight:normal;">Re-générer le PDF</div>
<svg style="left:622.5px;top:284.5px;" width="11" height="14" viewBox="0 0 11 14"><path d="M0.7 0.7h6.3l3.3 3.3v9.3H0.7z" fill="#fff" stroke="#1a1a40" stroke-width="1.4"/><path d="M6.8 0.7v3.5h3.5" fill="none" stroke="#1a1a40" stroke-width="1.1"/><path d="M3 11.5c1-2.5 2-5 2.2-7 0.3 2 1.5 3.5 3 4.5-2-0.2-4 0.8-5.2 2.5z" fill="none" stroke="#1a1a40" stroke-width="0.9"/></svg>
<div class="t" style="left:642.70px;top:285.15px;font-size:14px;color:#000;font-weight:normal;">Fusion PDF</div>
<div class="t" style="left:622.00px;top:317.23px;font-size:14.5px;color:#7a4e8e;font-weight:bold;-webkit-text-stroke:0.5px #7a4e8e;letter-spacing:0;">@</div>
<div class="t" style="left:642.70px;top:317.15px;font-size:14px;color:#000;font-weight:normal;">Envoyer email</div>
<svg style="left:622px;top:351.5px;" width="15" height="10.5" viewBox="0 0 15 10.5"><rect x="0" y="0" width="15" height="10.5" rx="1" fill="#b8c24e"/><rect x="2" y="3" width="3" height="4.5" fill="#fff"/><rect x="6.5" y="3.3" width="6.5" height="1.3" fill="#fff"/><rect x="6.5" y="6" width="6.5" height="1.3" fill="#fff"/></svg>
<div class="t" style="left:642.70px;top:348.75px;font-size:14px;color:#000;font-weight:normal;">Faire une demande de</div>
<div class="t" style="left:622.90px;top:368.95px;font-size:14px;color:#000;font-weight:normal;">prélèvement</div>
<svg style="left:622px;top:403.5px;" width="14.5" height="11" viewBox="0 0 14.5 11"><path d="M0 1a1 1 0 0 1 1-1h4.2l1.6 1.6h6.7a1 1 0 0 1 1 1V10a1 1 0 0 1-1 1H1a1 1 0 0 1-1-1z" fill="#000"/></svg>
<div class="t" style="left:642.70px;top:401.75px;font-size:14px;color:#000;font-weight:normal;">Archiver</div>
<div class="a" style="left:617px;top:425px;width:249px;height:32px;background:#263c5c;"></div>
<svg style="left:622px;top:435px;" width="17" height="12" viewBox="0 0 17 12"><path d="M0 1a1 1 0 0 1 1-1h4.2l1.6 1.6h6.5a1 1 0 0 1 1 1v1.3H4L0 10z" fill="#fff"/><path d="M4.2 4.8H16.8L13.5 11.8H0.6z" fill="#fff"/></svg>
<div class="t" style="left:642.50px;top:434.15px;font-size:14px;color:#fff;font-weight:normal;">Désarchiver</div>
</body></html>
